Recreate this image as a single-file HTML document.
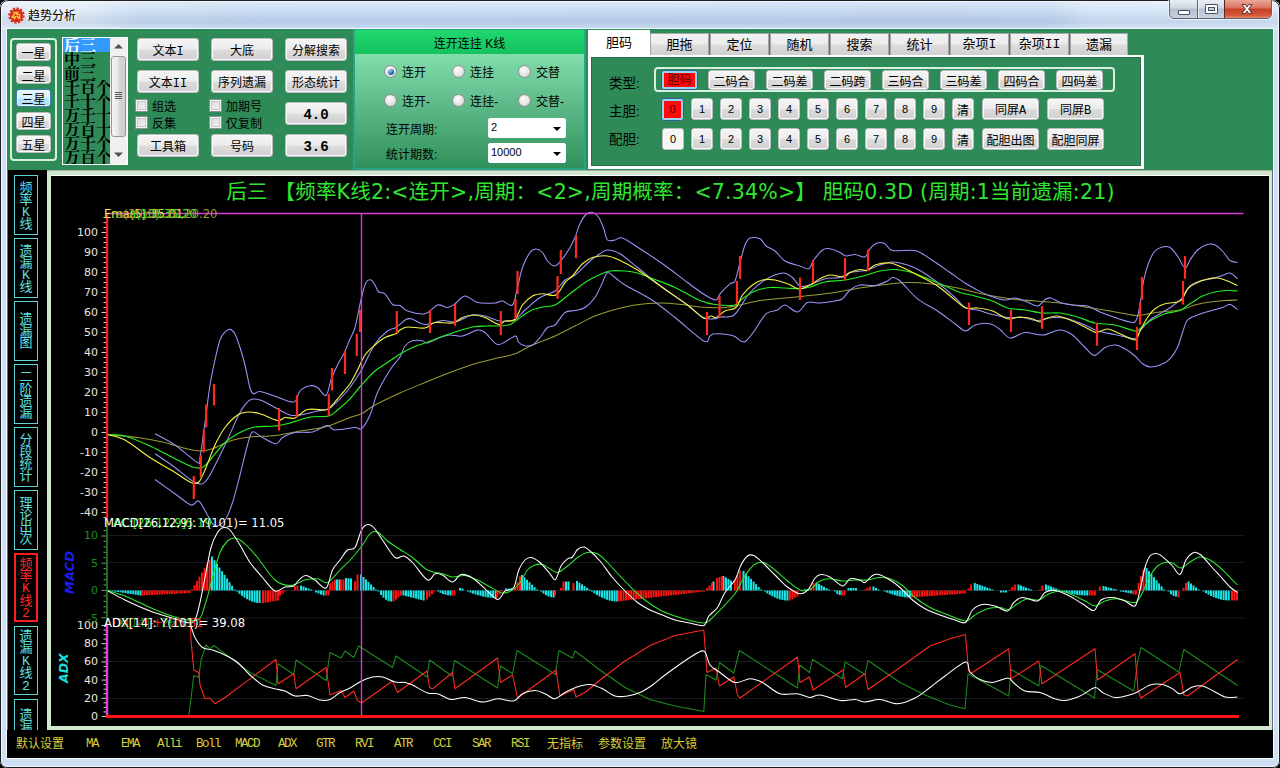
<!DOCTYPE html>
<html lang="zh-CN">
<head>
<meta charset="utf-8">
<title>趋势分析</title>
<style>
*{box-sizing:border-box;margin:0;padding:0}
html,body{width:1280px;height:768px;overflow:hidden;background:#000}
body{position:relative;font-family:"Liberation Sans","Noto Sans CJK SC",sans-serif;font-size:12px;color:#000}
.abs,.win *{position:absolute}
.win{position:absolute;left:0;top:0;width:1280px;height:768px;border-radius:8px 8px 7px 7px;background:#cfe0f6;overflow:hidden}
.fr-out{left:0;top:0;width:1280px;height:768px;border:1px solid #1c1c1c;border-radius:8px 8px 7px 7px}
.glass{left:0;top:0;width:1280px;height:30px;background:linear-gradient(90deg,#dfe9f6 0,#dce8f6 7%,#cbddf3 10.5%,#c4d9f1 20%,#c3d8f0 50%,#c0d5ed 70%,#c1d6ee 82%,#d2e3f6 85%,#d6e6f8 100%)}
.glass2{left:0;top:0;width:1280px;height:30px;background:linear-gradient(180deg,rgba(255,255,255,.45) 0,rgba(255,255,255,.12) 35%,rgba(90,120,160,.10) 60%,rgba(90,120,160,.12) 75%,rgba(255,255,255,.15) 100%)}
.fr-in{left:1px;top:1px;width:1278px;height:766px;border:1px solid #f2f8ff;border-radius:7px 7px 6px 6px}
.client{left:6px;top:28px;width:1268px;height:731px;background:#000;border:1px solid #f4faff;box-shadow:inset 1px 1px 0 #5e6878,inset -1px 0 0 #5e6878}
.ttl{left:28px;top:8px;font-size:12px;line-height:16px;color:#000;white-space:nowrap;text-shadow:0 0 6px #fff,0 0 6px #fff}
.cn{font-family:"Liberation Sans","Noto Sans CJK SC",sans-serif}
.mono{font-family:"Liberation Mono","Noto Sans CJK SC",monospace}
/* top green */
.top{left:7px;top:29px;width:1266px;height:141px;background:#2e8b57}
.btn{border:1px solid #b9bdbd;border-radius:3px;background:linear-gradient(180deg,#f4f4f4 0,#ececec 48%,#dcdcdc 52%,#d0d0d0 100%);box-shadow:inset 0 0 0 1px #fbfbfb;text-align:center;white-space:nowrap;color:#000;font-size:12px;overflow:hidden}
.btn.hot{border-color:#3c7fb1;background:linear-gradient(180deg,#eaf6fd 0,#d9f0fc 48%,#bee6fd 52%,#a7d9f5 100%);box-shadow:inset 0 0 0 1px #e6f5fd}
.gbox{border:2px solid #d6f0e0;border-radius:4px}
.chk{width:13px;height:13px;border:1px solid #8e8f8f;background:linear-gradient(135deg,#d8d8d8 0,#f6f6f6 100%);box-shadow:inset 0 0 0 1px #f4f4f4,inset 0 0 0 2px #c4c8cc}
.lbl{white-space:nowrap;line-height:14px}
.radio{width:13px;height:13px;border-radius:50%;border:1px solid #8e8f8f;background:radial-gradient(circle at 40% 35%,#fdfdfd 0,#e4e4e4 55%,#c6c6c6 100%)}
.radio.on::after{content:"";position:absolute;left:2.5px;top:2.5px;width:6px;height:6px;border-radius:50%;background:radial-gradient(circle at 35% 30%,#9fd8f6 0,#1f6fb4 55%,#0b3f78 100%)}
.combo{background:#fff;border-radius:2px;border:1px solid #fff}
.tab{border:1px solid #a4a8a8;border-bottom:none;background:linear-gradient(180deg,#f2f2f2 0,#ebebeb 48%,#dddddd 52%,#cfcfcf 100%);text-align:center;font-size:13px;line-height:22px}
.side{border:1.5px solid #5fd2d2;color:#5fe0e0;font-size:13px;line-height:12px;text-align:center}
.side span{position:static;display:block}
.bb{top:738px;color:#d6ce3c;font-size:12px;line-height:14px;white-space:nowrap}
.chart{left:0;top:0}
.bb.lat{font-size:12.5px;letter-spacing:-1.5px;top:737px}
.li{left:0;width:47px;padding-left:1px;height:14px;overflow:hidden;font-size:16px;font-weight:bold;line-height:15px;letter-spacing:0px;white-space:nowrap;background:#2e8b57;font-family:"Liberation Serif","Noto Serif CJK SC",serif}
</style>
</head>
<body>
<div class="win">
  <div class="glass"></div><div class="glass2"></div>
  <div class="fr-in"></div><div class="fr-out"></div>
  <!-- title -->
  <svg class="abs" style="left:7.5px;top:6.5px" width="17" height="17" viewBox="0 0 17 17"><circle cx="8.5" cy="8.5" r="6.6" fill="#d62a1e"/><circle cx="8.5" cy="8.5" r="7.1" fill="none" stroke="#d62a1e" stroke-width="2.2" stroke-dasharray="2.2 1.5"/><path d="M5.2 5.4h4.6l-1.1 2h2.9c.4 2.3-.4 3.8-2.1 4M7.2 5.6L4.2 10h3.4l-1.8 2.2M9.2 8.6c.3 1.3 1.5 2.7 3.4 3.1" fill="none" stroke="#f8c838" stroke-width="1.4"/></svg>
  <div class="ttl cn">趋势分析</div>
  <!-- caption buttons -->
  <div style="left:1169px;top:-1px;width:103px;height:20px;border:1px solid #5a6472;border-radius:0 0 5px 5px;background:linear-gradient(180deg,#e8eef6 0,#cfd8e4 45%,#b4c0d0 50%,#c6d2e2 100%);box-shadow:0 0 0 1px rgba(255,255,255,.6)"></div>
  <div style="left:1197px;top:0;width:1px;height:18px;background:#5a6472"></div>
  <div style="left:1198px;top:0;width:1px;height:18px;background:rgba(255,255,255,.7)"></div>
  <div style="left:1224px;top:0;width:47px;height:18px;border-left:1px solid #5a2a22;border-radius:0 0 4px 0;background:linear-gradient(180deg,#e9a99a 0,#d9705a 45%,#c43e22 50%,#d4583a 85%,#e48a6a 100%)"></div>
  <div style="left:1178px;top:10px;width:12px;height:5px;border:1px solid #47505c;background:#fff;border-radius:1px"></div>
  <div style="left:1205px;top:4px;width:13px;height:10px;border:1px solid #47505c;background:#fff;border-radius:1px"></div>
  <div style="left:1208px;top:7px;width:7px;height:4px;border:1px solid #47505c;background:#c8d2de"></div>
  <svg class="abs" style="left:1240px;top:3px" width="14" height="12" viewBox="0 0 14 12"><path d="M2 1.5l3.2 0 1.8 2.6 1.8-2.6 3.2 0-3.4 4.5 3.4 4.5-3.2 0-1.8-2.6-1.8 2.6-3.2 0 3.4-4.5z" fill="#fff" stroke="#5a3a38" stroke-width="1"/></svg>

  <div class="client"></div>
  <!-- ============ TOP GREEN PANEL ============ -->
  <div class="top"></div>
  <!-- star group -->
  <div class="gbox" style="left:10px;top:38px;width:47px;height:123px"></div>
  <div class="btn cn" style="left:16px;top:43px;width:35px;height:18px;line-height:21px">一星</div>
  <div class="btn cn" style="left:16px;top:66px;width:35px;height:18px;line-height:21px">二星</div>
  <div class="btn cn hot" style="left:16px;top:89px;width:35px;height:18px;line-height:21px">三星</div>
  <div class="btn cn" style="left:16px;top:112px;width:35px;height:18px;line-height:21px">四星</div>
  <div class="btn cn" style="left:16px;top:135px;width:35px;height:18px;line-height:21px">五星</div>
  <!-- listbox -->
  <div style="left:62px;top:37px;width:66px;height:128px;background:#fff"></div>
  <div style="left:63px;top:38px;width:47px;height:126px;background:#2e8b57;overflow:hidden">
    <div class="li" style="top:0;background:#3399ff;color:#fff">后三</div>
    <div class="li" style="top:14px">中三</div>
    <div class="li" style="top:28px">前三</div>
    <div class="li" style="top:42px">千百个</div>
    <div class="li" style="top:56px">千十个</div>
    <div class="li" style="top:70px">万千十</div>
    <div class="li" style="top:84px">万百十</div>
    <div class="li" style="top:98px">万千个</div>
    <div class="li" style="top:112px">万百个</div>
  </div>
  <div style="left:110px;top:38px;width:17px;height:126px;background:#f0f0f0"></div>
  <div style="left:111px;top:56px;width:15px;height:81px;border:1px solid #979797;border-radius:3px;background:linear-gradient(90deg,#f4f4f4 0,#e9e9e9 45%,#d6d6d6 55%,#cfcfcf 100%)"></div>
  <div style="left:115px;top:92px;width:7px;height:1px;background:#555;box-shadow:0 2px 0 #555,0 4px 0 #555,0 6px 0 #555"></div>
  <svg class="abs" style="left:114px;top:43px" width="9" height="6" viewBox="0 0 9 6"><path d="M0 5.5L4.5 1 9 5.5z" fill="#505050"/></svg>
  <svg class="abs" style="left:114px;top:152px" width="9" height="6" viewBox="0 0 9 6"><path d="M0 .5L4.5 5 9 .5z" fill="#505050"/></svg>

  <!-- button columns -->
  <div class="btn mono" style="left:137px;top:38px;width:62px;height:23px;line-height:26px">文本I</div>
  <div class="btn mono" style="left:211px;top:38px;width:62px;height:23px;line-height:26px">大底</div>
  <div class="btn mono" style="left:285px;top:38px;width:62px;height:23px;line-height:26px">分解搜索</div>
  <div class="btn mono" style="left:137px;top:70px;width:62px;height:23px;line-height:26px">文本II</div>
  <div class="btn mono" style="left:211px;top:70px;width:62px;height:23px;line-height:26px">序列遗漏</div>
  <div class="btn mono" style="left:285px;top:70px;width:62px;height:23px;line-height:26px">形态统计</div>
  <div class="btn" style="left:285px;top:102px;width:62px;height:23px;line-height:24px;font-family:'Liberation Mono','Liberation Serif',monospace;font-weight:bold;font-size:14px;letter-spacing:0">4.0</div>
  <div class="btn" style="left:285px;top:134px;width:62px;height:23px;line-height:24px;font-family:'Liberation Mono','Liberation Serif',monospace;font-weight:bold;font-size:14px;letter-spacing:0">3.6</div>
  <div class="btn mono" style="left:137px;top:134px;width:62px;height:23px;line-height:26px">工具箱</div>
  <div class="btn mono" style="left:211px;top:134px;width:62px;height:23px;line-height:26px">号码</div>
  <div class="chk" style="left:135px;top:99px"></div><div class="lbl cn" style="left:152px;top:100px">组选</div>
  <div class="chk" style="left:135px;top:116px"></div><div class="lbl cn" style="left:152px;top:117px">反集</div>
  <div class="chk" style="left:209px;top:99px"></div><div class="lbl cn" style="left:226px;top:100px">加期号</div>
  <div class="chk" style="left:209px;top:116px"></div><div class="lbl cn" style="left:226px;top:117px">仅复制</div>

  <!-- kline panel -->
  <div style="left:353px;top:29px;width:233px;height:141px;background:linear-gradient(180deg,#82dcac 0,#82dcac 24px,#58b583 60%,#30905b 100%);border:2px solid #25a584;border-top-width:1px"></div>
  <div class="cn" style="left:355px;top:30px;width:229px;height:24px;background:linear-gradient(180deg,#20d86e 0,#14c25e 100%);text-align:center;line-height:29px;font-size:12px;overflow:hidden">连开连挂 K线</div>
  <div class="radio on" style="left:384px;top:65px"></div><div class="lbl cn" style="left:402px;top:66px">连开</div>
  <div class="radio" style="left:452px;top:65px"></div><div class="lbl cn" style="left:470px;top:66px">连挂</div>
  <div class="radio" style="left:518px;top:65px"></div><div class="lbl cn" style="left:536px;top:66px">交替</div>
  <div class="radio" style="left:384px;top:94px"></div><div class="lbl cn" style="left:402px;top:95px">连开-</div>
  <div class="radio" style="left:452px;top:94px"></div><div class="lbl cn" style="left:470px;top:95px">连挂-</div>
  <div class="radio" style="left:518px;top:94px"></div><div class="lbl cn" style="left:536px;top:95px">交替-</div>
  <div class="lbl cn" style="left:386px;top:123px">连开周期:</div>
  <div class="lbl cn" style="left:386px;top:148px">统计期数:</div>
  <div class="combo" style="left:488px;top:118px;width:78px;height:20px"></div>
  <div class="combo" style="left:488px;top:143px;width:78px;height:20px"></div>
  <div class="lbl" style="left:491px;top:120px;font-size:11px">2</div>
  <div class="lbl" style="left:491px;top:145px;font-size:11px">10000</div>
  <svg class="abs" style="left:553px;top:127px" width="8" height="4" viewBox="0 0 8 4"><path d="M0 0h8L4 4z" fill="#000"/></svg>
  <svg class="abs" style="left:553px;top:152px" width="8" height="4" viewBox="0 0 8 4"><path d="M0 0h8L4 4z" fill="#000"/></svg>

  <!-- tab control -->
  <div style="left:588px;top:55px;width:556px;height:114px;background:#fff"></div>
  <div style="left:591px;top:57px;width:550px;height:109px;background:#2e8b57;border:1px solid #256f46"></div>
  <div class="cn" style="left:588px;top:30px;width:62px;height:27px;background:#fff;text-align:center;font-size:13px;line-height:25px">胆码</div>
  <div class="tab cn" style="left:650px;top:33px;width:59px;height:22px">胆拖</div>
  <div class="tab cn" style="left:710px;top:33px;width:59px;height:22px">定位</div>
  <div class="tab cn" style="left:770px;top:33px;width:59px;height:22px">随机</div>
  <div class="tab cn" style="left:830px;top:33px;width:59px;height:22px">搜索</div>
  <div class="tab cn" style="left:890px;top:33px;width:59px;height:22px">统计</div>
  <div class="tab mono" style="left:950px;top:33px;width:59px;height:22px">杂项I</div>
  <div class="tab mono" style="left:1010px;top:33px;width:59px;height:22px">杂项II</div>
  <div class="tab cn" style="left:1070px;top:33px;width:58px;height:22px">遗漏</div>

  <div class="lbl cn" style="left:609px;top:77px;font-size:13.5px">类型:</div>
  <div class="lbl cn" style="left:609px;top:105px;font-size:13.5px">主胆:</div>
  <div class="lbl cn" style="left:609px;top:133px;font-size:13.5px">配胆:</div>
  <div class="gbox" style="left:654px;top:67px;width:461px;height:25px"></div>
  <div class="btn cn" style="left:661px;top:70px;width:37px;height:20px;line-height:22px;border-color:#2c628b;background:#9ad4f2;box-shadow:none"></div>
  <div class="cn" style="left:664px;top:73px;width:31px;height:14px;background:#ff0a0a;color:#5a0000;font-size:12px;line-height:14px;text-align:center;white-space:nowrap">胆码</div>
  <div class="btn cn" style="left:708px;top:70px;width:47px;height:20px;line-height:22px">二码合</div>
  <div class="btn cn" style="left:766px;top:70px;width:47px;height:20px;line-height:22px">二码差</div>
  <div class="btn cn" style="left:824px;top:70px;width:47px;height:20px;line-height:22px">二码跨</div>
  <div class="btn cn" style="left:882px;top:70px;width:47px;height:20px;line-height:22px">三码合</div>
  <div class="btn cn" style="left:940px;top:70px;width:47px;height:20px;line-height:22px">三码差</div>
  <div class="btn cn" style="left:998px;top:70px;width:47px;height:20px;line-height:22px">四码合</div>
  <div class="btn cn" style="left:1056px;top:70px;width:47px;height:20px;line-height:22px">四码差</div>
  <div class="btn" style="left:661px;top:98px;width:23px;height:23px;border-color:#2c628b;background:#9ad4f2;box-shadow:none"></div>
  <div style="left:664px;top:101px;width:17px;height:17px;background:#ff0a0a;color:#5a0000;font-size:11px;line-height:17px;text-align:center">0</div>
  <div class="btn" style="left:691px;top:98px;width:22px;height:22px;line-height:20px;font-size:11px">1</div>
  <div class="btn" style="left:720px;top:98px;width:22px;height:22px;line-height:20px;font-size:11px">2</div>
  <div class="btn" style="left:749px;top:98px;width:22px;height:22px;line-height:20px;font-size:11px">3</div>
  <div class="btn" style="left:778px;top:98px;width:22px;height:22px;line-height:20px;font-size:11px">4</div>
  <div class="btn" style="left:807px;top:98px;width:22px;height:22px;line-height:20px;font-size:11px">5</div>
  <div class="btn" style="left:836px;top:98px;width:22px;height:22px;line-height:20px;font-size:11px">6</div>
  <div class="btn" style="left:865px;top:98px;width:22px;height:22px;line-height:20px;font-size:11px">7</div>
  <div class="btn" style="left:894px;top:98px;width:22px;height:22px;line-height:20px;font-size:11px">8</div>
  <div class="btn" style="left:923px;top:98px;width:22px;height:22px;line-height:20px;font-size:11px">9</div>
  <div class="btn" style="left:662px;top:128px;width:22px;height:22px;line-height:20px;font-size:11px;background:#f6f6f6">0</div>
  <div class="btn" style="left:691px;top:128px;width:22px;height:22px;line-height:20px;font-size:11px">1</div>
  <div class="btn" style="left:720px;top:128px;width:22px;height:22px;line-height:20px;font-size:11px">2</div>
  <div class="btn" style="left:749px;top:128px;width:22px;height:22px;line-height:20px;font-size:11px">3</div>
  <div class="btn" style="left:778px;top:128px;width:22px;height:22px;line-height:20px;font-size:11px">4</div>
  <div class="btn" style="left:807px;top:128px;width:22px;height:22px;line-height:20px;font-size:11px">5</div>
  <div class="btn" style="left:836px;top:128px;width:22px;height:22px;line-height:20px;font-size:11px">6</div>
  <div class="btn" style="left:865px;top:128px;width:22px;height:22px;line-height:20px;font-size:11px">7</div>
  <div class="btn" style="left:894px;top:128px;width:22px;height:22px;line-height:20px;font-size:11px">8</div>
  <div class="btn" style="left:923px;top:128px;width:22px;height:22px;line-height:20px;font-size:11px">9</div>
  <div class="btn cn" style="left:952px;top:98px;width:22px;height:22px;line-height:24px">清</div>
  <div class="btn cn" style="left:952px;top:128px;width:22px;height:22px;line-height:24px">清</div>
  <div class="btn mono" style="left:982px;top:98px;width:57px;height:22px;line-height:24px">同屏A</div>
  <div class="btn mono" style="left:1047px;top:98px;width:57px;height:22px;line-height:24px">同屏B</div>
  <div class="btn cn" style="left:982px;top:128px;width:57px;height:22px;line-height:24px">配胆出图</div>
  <div class="btn cn" style="left:1047px;top:128px;width:57px;height:22px;line-height:24px">配胆同屏</div>

  <!-- ============ LEFT SIDE BAR ============ -->
  <div class="side mono" style="left:14px;top:175px;width:24px;height:60px;padding-top:7px"><span>频</span><span>率</span><span>K</span><span>线</span></div>
  <div class="side mono" style="left:14px;top:238px;width:24px;height:60px;padding-top:7px"><span>遗</span><span>漏</span><span>K</span><span>线</span></div>
  <div class="side mono" style="left:14px;top:301px;width:24px;height:60px;padding-top:12px"><span>遗</span><span>漏</span><span>图</span></div>
  <div class="side mono" style="left:14px;top:364px;width:24px;height:60px;padding-top:7px"><span>二</span><span>阶</span><span>遗</span><span>漏</span></div>
  <div class="side mono" style="left:14px;top:427px;width:24px;height:60px;padding-top:7px"><span>分</span><span>段</span><span>统</span><span>计</span></div>
  <div class="side mono" style="left:14px;top:490px;width:24px;height:60px;padding-top:7px"><span>理</span><span>论</span><span>出</span><span>次</span></div>
  <div class="side mono" style="left:14px;top:553px;width:24px;height:69px;padding-top:3.5px;border:2px solid #ff1e1e;color:#ff2a2a;line-height:12.4px"><span>频</span><span>率</span><span>K</span><span>线</span><span>2</span></div>
  <div class="side mono" style="left:14px;top:626px;width:24px;height:69px;padding-top:4px;line-height:12.4px"><span>遗</span><span>漏</span><span>K</span><span>线</span><span>2</span></div>
  <div class="side mono" style="left:14px;top:699px;width:24px;height:40px;padding-top:10px;border-bottom:none"><span>遗</span><span>漏</span></div>

  <!-- ============ CHART ============ -->
  <div style="left:47px;top:170px;width:1225px;height:560px;background:#cfe6cf;border-top:1px solid #a4b0a6"></div>
  <div style="left:51px;top:175px;width:1218px;height:551px;background:#000;border-top:1px solid #fff"></div>
  <div class="cn" style="left:54px;top:179px;width:1233px;text-align:center;font-size:20.5px;line-height:26px;color:#30e630;white-space:nowrap;letter-spacing:.2px;font-family:'DejaVu Sans','Noto Sans CJK SC',sans-serif">后三 【频率K线2:&lt;连开&gt;,周期：&lt;2&gt;,周期概率：&lt;7.34%&gt;】 胆码0.3D (周期:1当前遗漏:21)</div>
  <svg class="chart" width="1280" height="768" viewBox="0 0 1280 768">
<line x1="108" y1="535.5" x2="1243" y2="535.5" stroke="#191d21" stroke-width="1"/>
<line x1="108" y1="562.5" x2="1243" y2="562.5" stroke="#191d21" stroke-width="1"/>
<line x1="108" y1="590.5" x2="1243" y2="590.5" stroke="#191d21" stroke-width="1"/>
<line x1="108" y1="618" x2="1243" y2="618" stroke="#191d21" stroke-width="1"/>
<line x1="108" y1="661.5" x2="1243" y2="661.5" stroke="#191d21" stroke-width="1"/>
<line x1="108" y1="698.5" x2="1243" y2="698.5" stroke="#191d21" stroke-width="1"/>
<g fill="#19e6e6"><rect x="107.0" y="589.9" width="2.0" height="0.6"/><rect x="109.5" y="590.5" width="2.0" height="0.6"/><rect x="112.0" y="590.5" width="2.0" height="0.8"/><rect x="114.5" y="590.5" width="2.0" height="1.2"/><rect x="117.1" y="590.5" width="2.0" height="1.5"/><rect x="119.6" y="590.5" width="2.0" height="1.9"/><rect x="122.1" y="590.5" width="2.0" height="2.3"/><rect x="124.6" y="590.5" width="2.0" height="2.7"/><rect x="127.1" y="590.5" width="2.0" height="3.1"/><rect x="129.6" y="590.5" width="2.0" height="3.5"/><rect x="132.2" y="590.5" width="2.0" height="3.8"/><rect x="134.7" y="590.5" width="2.0" height="4.2"/><rect x="137.2" y="590.5" width="2.0" height="4.6"/><rect x="139.7" y="590.5" width="2.0" height="5.0"/><rect x="211.0" y="556.5" width="2.0" height="34.0"/><rect x="213.5" y="560.2" width="2.0" height="30.3"/><rect x="216.0" y="563.8" width="2.0" height="26.7"/><rect x="218.5" y="567.5" width="2.0" height="23.0"/><rect x="221.1" y="571.2" width="2.0" height="19.3"/><rect x="223.6" y="574.8" width="2.0" height="15.7"/><rect x="226.1" y="578.5" width="2.0" height="12.0"/><rect x="228.6" y="582.2" width="2.0" height="8.3"/><rect x="231.1" y="585.8" width="2.0" height="4.7"/><rect x="233.6" y="589.5" width="2.0" height="1.0"/><rect x="236.0" y="590.5" width="2.0" height="1.0"/><rect x="238.5" y="590.5" width="2.0" height="3.4"/><rect x="241.0" y="590.5" width="2.0" height="5.4"/><rect x="243.5" y="590.5" width="2.0" height="7.2"/><rect x="246.1" y="590.5" width="2.0" height="8.7"/><rect x="248.6" y="590.5" width="2.0" height="10.0"/><rect x="251.1" y="590.5" width="2.0" height="11.1"/><rect x="253.6" y="590.5" width="2.0" height="11.9"/><rect x="256.1" y="590.5" width="2.0" height="12.3"/><rect x="258.6" y="590.5" width="2.0" height="12.5"/><rect x="300.0" y="585.5" width="2.0" height="5.0"/><rect x="302.5" y="586.5" width="2.0" height="4.0"/><rect x="305.0" y="587.5" width="2.0" height="3.0"/><rect x="307.5" y="588.5" width="2.0" height="2.0"/><rect x="310.1" y="589.5" width="2.0" height="1.0"/><rect x="315.0" y="590.5" width="2.0" height="2.0"/><rect x="317.5" y="590.5" width="2.0" height="3.0"/><rect x="320.0" y="590.5" width="2.0" height="4.0"/><rect x="322.5" y="590.5" width="2.0" height="5.0"/><rect x="336.0" y="579.5" width="2.0" height="11.0"/><rect x="338.5" y="579.5" width="2.0" height="11.0"/><rect x="345.0" y="578.0" width="2.0" height="12.5"/><rect x="347.5" y="578.2" width="2.0" height="12.2"/><rect x="350.0" y="578.5" width="2.0" height="12.0"/><rect x="360.0" y="574.5" width="2.0" height="16.0"/><rect x="362.5" y="577.0" width="2.0" height="13.5"/><rect x="365.0" y="579.5" width="2.0" height="11.0"/><rect x="367.5" y="582.0" width="2.0" height="8.5"/><rect x="370.1" y="584.5" width="2.0" height="6.0"/><rect x="372.6" y="587.0" width="2.0" height="3.5"/><rect x="375.1" y="589.5" width="2.0" height="1.0"/><rect x="377.5" y="590.5" width="2.0" height="1.0"/><rect x="380.0" y="590.5" width="2.0" height="4.5"/><rect x="382.5" y="590.5" width="2.0" height="7.2"/><rect x="385.0" y="590.5" width="2.0" height="9.3"/><rect x="387.6" y="590.5" width="2.0" height="10.6"/><rect x="390.1" y="590.5" width="2.0" height="11.0"/><rect x="402.5" y="590.5" width="2.0" height="5.0"/><rect x="405.0" y="590.5" width="2.0" height="5.6"/><rect x="407.5" y="590.5" width="2.0" height="6.2"/><rect x="410.0" y="590.5" width="2.0" height="6.9"/><rect x="412.6" y="590.5" width="2.0" height="7.5"/><rect x="415.1" y="590.5" width="2.0" height="8.1"/><rect x="417.6" y="590.5" width="2.0" height="8.8"/><rect x="420.1" y="590.5" width="2.0" height="9.4"/><rect x="422.6" y="590.5" width="2.0" height="10.0"/><rect x="437.0" y="590.5" width="2.0" height="1.0"/><rect x="439.5" y="590.5" width="2.0" height="2.4"/><rect x="442.0" y="590.5" width="2.0" height="3.5"/><rect x="444.5" y="590.5" width="2.0" height="4.3"/><rect x="447.1" y="590.5" width="2.0" height="4.8"/><rect x="449.6" y="590.5" width="2.0" height="5.0"/><rect x="459.0" y="588.0" width="2.0" height="2.5"/><rect x="461.5" y="588.5" width="2.0" height="2.0"/><rect x="467.0" y="590.5" width="2.0" height="1.0"/><rect x="469.5" y="590.5" width="2.0" height="2.1"/><rect x="472.0" y="590.5" width="2.0" height="3.1"/><rect x="474.5" y="590.5" width="2.0" height="3.9"/><rect x="477.1" y="590.5" width="2.0" height="4.7"/><rect x="479.6" y="590.5" width="2.0" height="5.4"/><rect x="482.1" y="590.5" width="2.0" height="6.1"/><rect x="484.6" y="590.5" width="2.0" height="6.6"/><rect x="487.1" y="590.5" width="2.0" height="7.0"/><rect x="489.6" y="590.5" width="2.0" height="7.3"/><rect x="492.1" y="590.5" width="2.0" height="7.4"/><rect x="494.7" y="590.5" width="2.0" height="7.5"/><rect x="505.0" y="588.5" width="2.0" height="2.0"/><rect x="507.5" y="588.5" width="2.0" height="2.0"/><rect x="510.0" y="588.5" width="2.0" height="2.0"/><rect x="521.0" y="575.0" width="2.0" height="15.5"/><rect x="523.5" y="577.4" width="2.0" height="13.1"/><rect x="526.0" y="579.8" width="2.0" height="10.7"/><rect x="528.5" y="582.2" width="2.0" height="8.2"/><rect x="531.1" y="584.7" width="2.0" height="5.8"/><rect x="533.6" y="587.1" width="2.0" height="3.4"/><rect x="536.1" y="589.5" width="2.0" height="1.0"/><rect x="540.0" y="590.5" width="2.0" height="1.0"/><rect x="542.5" y="590.5" width="2.0" height="3.1"/><rect x="545.0" y="590.5" width="2.0" height="4.7"/><rect x="547.5" y="590.5" width="2.0" height="6.0"/><rect x="550.1" y="590.5" width="2.0" height="6.7"/><rect x="552.6" y="590.5" width="2.0" height="7.0"/><rect x="565.0" y="581.5" width="2.0" height="9.0"/><rect x="567.5" y="581.5" width="2.0" height="9.0"/><rect x="576.0" y="581.0" width="2.0" height="9.5"/><rect x="578.5" y="582.7" width="2.0" height="7.8"/><rect x="581.0" y="584.4" width="2.0" height="6.1"/><rect x="583.5" y="586.1" width="2.0" height="4.4"/><rect x="586.1" y="587.8" width="2.0" height="2.7"/><rect x="588.6" y="589.5" width="2.0" height="1.0"/><rect x="591.0" y="590.5" width="2.0" height="1.0"/><rect x="593.5" y="590.5" width="2.0" height="2.9"/><rect x="596.0" y="590.5" width="2.0" height="4.5"/><rect x="598.5" y="590.5" width="2.0" height="5.9"/><rect x="601.1" y="590.5" width="2.0" height="7.2"/><rect x="603.6" y="590.5" width="2.0" height="8.3"/><rect x="606.1" y="590.5" width="2.0" height="9.3"/><rect x="608.6" y="590.5" width="2.0" height="10.0"/><rect x="611.1" y="590.5" width="2.0" height="10.6"/><rect x="613.6" y="590.5" width="2.0" height="10.9"/><rect x="616.1" y="590.5" width="2.0" height="11.0"/><rect x="712.5" y="581.5" width="2.0" height="9.0"/><rect x="722.5" y="576.0" width="2.0" height="14.5"/><rect x="725.0" y="577.5" width="2.0" height="13.0"/><rect x="727.5" y="579.0" width="2.0" height="11.5"/><rect x="730.0" y="580.5" width="2.0" height="10.0"/><rect x="742.5" y="571.0" width="2.0" height="19.5"/><rect x="745.0" y="573.6" width="2.0" height="16.9"/><rect x="747.5" y="576.3" width="2.0" height="14.2"/><rect x="750.0" y="578.9" width="2.0" height="11.6"/><rect x="752.6" y="581.6" width="2.0" height="8.9"/><rect x="755.1" y="584.2" width="2.0" height="6.3"/><rect x="757.6" y="586.9" width="2.0" height="3.6"/><rect x="760.1" y="589.5" width="2.0" height="1.0"/><rect x="763.8" y="590.5" width="2.0" height="1.0"/><rect x="766.3" y="590.5" width="2.0" height="2.9"/><rect x="768.8" y="590.5" width="2.0" height="4.4"/><rect x="771.3" y="590.5" width="2.0" height="5.8"/><rect x="773.8" y="590.5" width="2.0" height="7.0"/><rect x="776.3" y="590.5" width="2.0" height="8.1"/><rect x="778.8" y="590.5" width="2.0" height="8.9"/><rect x="781.4" y="590.5" width="2.0" height="9.5"/><rect x="783.9" y="590.5" width="2.0" height="9.9"/><rect x="786.4" y="590.5" width="2.0" height="10.0"/><rect x="803.8" y="589.3" width="2.0" height="1.2"/><rect x="806.3" y="589.3" width="2.0" height="1.2"/><rect x="815.5" y="582.5" width="2.0" height="8.0"/><rect x="818.0" y="583.9" width="2.0" height="6.6"/><rect x="820.5" y="585.3" width="2.0" height="5.2"/><rect x="823.0" y="586.7" width="2.0" height="3.8"/><rect x="825.6" y="588.1" width="2.0" height="2.4"/><rect x="828.1" y="589.5" width="2.0" height="1.0"/><rect x="833.8" y="590.5" width="2.0" height="1.0"/><rect x="836.3" y="590.5" width="2.0" height="3.6"/><rect x="838.8" y="590.5" width="2.0" height="4.5"/><rect x="847.5" y="588.0" width="2.0" height="2.5"/><rect x="850.0" y="588.0" width="2.0" height="2.5"/><rect x="852.5" y="588.0" width="2.0" height="2.5"/><rect x="855.0" y="588.0" width="2.0" height="2.5"/><rect x="872.5" y="586.5" width="2.0" height="4.0"/><rect x="875.0" y="588.0" width="2.0" height="2.5"/><rect x="877.5" y="589.5" width="2.0" height="1.0"/><rect x="883.8" y="590.5" width="2.0" height="1.0"/><rect x="886.3" y="590.5" width="2.0" height="2.1"/><rect x="888.8" y="590.5" width="2.0" height="3.1"/><rect x="891.3" y="590.5" width="2.0" height="3.9"/><rect x="893.8" y="590.5" width="2.0" height="4.7"/><rect x="896.3" y="590.5" width="2.0" height="5.4"/><rect x="898.8" y="590.5" width="2.0" height="6.0"/><rect x="901.4" y="590.5" width="2.0" height="6.4"/><rect x="903.9" y="590.5" width="2.0" height="6.7"/><rect x="906.4" y="590.5" width="2.0" height="6.9"/><rect x="908.9" y="590.5" width="2.0" height="7.0"/><rect x="973.8" y="583.0" width="2.0" height="7.5"/><rect x="976.3" y="583.9" width="2.0" height="6.6"/><rect x="978.8" y="584.9" width="2.0" height="5.6"/><rect x="981.3" y="585.8" width="2.0" height="4.7"/><rect x="983.8" y="586.7" width="2.0" height="3.8"/><rect x="986.3" y="587.6" width="2.0" height="2.9"/><rect x="988.8" y="588.6" width="2.0" height="1.9"/><rect x="991.4" y="589.5" width="2.0" height="1.0"/><rect x="1000.0" y="590.5" width="2.0" height="2.0"/><rect x="1002.5" y="590.5" width="2.0" height="2.0"/><rect x="1005.0" y="590.5" width="2.0" height="2.0"/><rect x="1017.5" y="584.5" width="2.0" height="6.0"/><rect x="1020.0" y="585.5" width="2.0" height="5.0"/><rect x="1022.5" y="586.5" width="2.0" height="4.0"/><rect x="1025.0" y="587.5" width="2.0" height="3.0"/><rect x="1027.6" y="588.5" width="2.0" height="2.0"/><rect x="1030.1" y="589.5" width="2.0" height="1.0"/><rect x="1045.0" y="584.5" width="2.0" height="6.0"/><rect x="1047.5" y="585.5" width="2.0" height="5.0"/><rect x="1050.0" y="586.5" width="2.0" height="4.0"/><rect x="1052.5" y="587.5" width="2.0" height="3.0"/><rect x="1055.1" y="588.5" width="2.0" height="2.0"/><rect x="1057.6" y="589.5" width="2.0" height="1.0"/><rect x="1061.0" y="590.5" width="2.0" height="1.0"/><rect x="1063.5" y="590.5" width="2.0" height="1.8"/><rect x="1066.0" y="590.5" width="2.0" height="2.4"/><rect x="1068.5" y="590.5" width="2.0" height="3.0"/><rect x="1071.1" y="590.5" width="2.0" height="3.5"/><rect x="1073.6" y="590.5" width="2.0" height="3.9"/><rect x="1076.1" y="590.5" width="2.0" height="4.3"/><rect x="1078.6" y="590.5" width="2.0" height="4.6"/><rect x="1081.1" y="590.5" width="2.0" height="4.8"/><rect x="1083.6" y="590.5" width="2.0" height="5.0"/><rect x="1086.2" y="590.5" width="2.0" height="5.0"/><rect x="1102.5" y="586.0" width="2.0" height="4.5"/><rect x="1105.0" y="586.7" width="2.0" height="3.8"/><rect x="1107.5" y="587.4" width="2.0" height="3.1"/><rect x="1110.0" y="588.1" width="2.0" height="2.4"/><rect x="1112.6" y="588.8" width="2.0" height="1.7"/><rect x="1115.1" y="589.5" width="2.0" height="1.0"/><rect x="1120.0" y="590.5" width="2.0" height="1.0"/><rect x="1122.5" y="590.5" width="2.0" height="1.5"/><rect x="1125.0" y="590.5" width="2.0" height="2.0"/><rect x="1127.5" y="590.5" width="2.0" height="2.5"/><rect x="1130.1" y="590.5" width="2.0" height="3.0"/><rect x="1145.5" y="568.0" width="2.0" height="22.5"/><rect x="1148.0" y="571.1" width="2.0" height="19.4"/><rect x="1150.5" y="574.1" width="2.0" height="16.4"/><rect x="1153.0" y="577.2" width="2.0" height="13.3"/><rect x="1155.6" y="580.3" width="2.0" height="10.2"/><rect x="1158.1" y="583.4" width="2.0" height="7.1"/><rect x="1160.6" y="586.4" width="2.0" height="4.1"/><rect x="1163.1" y="589.5" width="2.0" height="1.0"/><rect x="1167.5" y="590.5" width="2.0" height="1.0"/><rect x="1170.0" y="590.5" width="2.0" height="3.7"/><rect x="1172.5" y="590.5" width="2.0" height="5.4"/><rect x="1175.0" y="590.5" width="2.0" height="6.0"/><rect x="1187.5" y="581.5" width="2.0" height="9.0"/><rect x="1190.0" y="583.5" width="2.0" height="7.0"/><rect x="1192.5" y="585.5" width="2.0" height="5.0"/><rect x="1195.0" y="587.5" width="2.0" height="3.0"/><rect x="1197.6" y="589.5" width="2.0" height="1.0"/><rect x="1202.5" y="590.5" width="2.0" height="1.0"/><rect x="1205.0" y="590.5" width="2.0" height="2.7"/><rect x="1207.5" y="590.5" width="2.0" height="4.1"/><rect x="1210.0" y="590.5" width="2.0" height="5.4"/><rect x="1212.6" y="590.5" width="2.0" height="6.6"/><rect x="1215.1" y="590.5" width="2.0" height="7.6"/><rect x="1217.6" y="590.5" width="2.0" height="8.4"/><rect x="1220.1" y="590.5" width="2.0" height="9.1"/><rect x="1222.6" y="590.5" width="2.0" height="9.6"/><rect x="1225.1" y="590.5" width="2.0" height="9.9"/><rect x="1227.7" y="590.5" width="2.0" height="10.0"/></g>
<g fill="#ff1414"><rect x="141.0" y="590.5" width="2.0" height="5.0"/><rect x="143.5" y="590.5" width="2.0" height="4.9"/><rect x="146.0" y="590.5" width="2.0" height="4.7"/><rect x="148.5" y="590.5" width="2.0" height="4.6"/><rect x="151.1" y="590.5" width="2.0" height="4.5"/><rect x="153.6" y="590.5" width="2.0" height="4.3"/><rect x="156.1" y="590.5" width="2.0" height="4.2"/><rect x="158.6" y="590.5" width="2.0" height="4.1"/><rect x="161.1" y="590.5" width="2.0" height="3.9"/><rect x="163.6" y="590.5" width="2.0" height="3.8"/><rect x="166.2" y="590.5" width="2.0" height="3.7"/><rect x="168.7" y="590.5" width="2.0" height="3.6"/><rect x="171.2" y="590.5" width="2.0" height="3.4"/><rect x="173.7" y="590.5" width="2.0" height="3.3"/><rect x="176.2" y="590.5" width="2.0" height="3.2"/><rect x="178.7" y="590.5" width="2.0" height="3.0"/><rect x="181.2" y="590.5" width="2.0" height="2.9"/><rect x="183.8" y="590.5" width="2.0" height="2.8"/><rect x="186.3" y="590.5" width="2.0" height="2.6"/><rect x="188.8" y="590.5" width="2.0" height="2.5"/><rect x="191.0" y="589.5" width="2.0" height="1.0"/><rect x="193.5" y="585.2" width="2.0" height="5.3"/><rect x="196.0" y="580.9" width="2.0" height="9.6"/><rect x="198.5" y="576.6" width="2.0" height="13.9"/><rect x="201.1" y="572.4" width="2.0" height="18.1"/><rect x="203.6" y="568.1" width="2.0" height="22.4"/><rect x="206.1" y="563.8" width="2.0" height="26.7"/><rect x="208.6" y="559.5" width="2.0" height="31.0"/><rect x="262.0" y="590.5" width="2.0" height="12.5"/><rect x="264.5" y="590.5" width="2.0" height="12.1"/><rect x="267.0" y="590.5" width="2.0" height="11.7"/><rect x="269.5" y="590.5" width="2.0" height="11.2"/><rect x="272.1" y="590.5" width="2.0" height="10.8"/><rect x="274.6" y="590.5" width="2.0" height="10.4"/><rect x="277.1" y="590.5" width="2.0" height="10.0"/><rect x="279.0" y="590.5" width="2.0" height="5.0"/><rect x="281.5" y="590.5" width="2.0" height="3.0"/><rect x="284.0" y="590.5" width="2.0" height="1.0"/><rect x="294.0" y="586.5" width="2.0" height="4.0"/><rect x="296.5" y="585.5" width="2.0" height="5.0"/><rect x="325.0" y="590.5" width="2.0" height="5.0"/><rect x="327.5" y="590.5" width="2.0" height="5.0"/><rect x="329.0" y="583.5" width="2.0" height="7.0"/><rect x="331.5" y="581.5" width="2.0" height="9.0"/><rect x="334.0" y="579.5" width="2.0" height="11.0"/><rect x="340.0" y="579.5" width="2.0" height="11.0"/><rect x="342.5" y="579.5" width="2.0" height="11.0"/><rect x="354.0" y="581.5" width="2.0" height="9.0"/><rect x="356.5" y="574.5" width="2.0" height="16.0"/><rect x="392.5" y="590.5" width="2.0" height="11.0"/><rect x="395.0" y="590.5" width="2.0" height="9.0"/><rect x="397.5" y="590.5" width="2.0" height="7.0"/><rect x="400.0" y="590.5" width="2.0" height="5.0"/><rect x="426.0" y="590.5" width="2.0" height="9.0"/><rect x="428.5" y="590.5" width="2.0" height="6.3"/><rect x="431.0" y="590.5" width="2.0" height="3.7"/><rect x="433.5" y="590.5" width="2.0" height="1.0"/><rect x="451.0" y="590.5" width="2.0" height="5.0"/><rect x="453.5" y="590.5" width="2.0" height="5.0"/><rect x="496.0" y="590.5" width="2.0" height="7.5"/><rect x="498.5" y="590.5" width="2.0" height="4.2"/><rect x="501.0" y="590.5" width="2.0" height="1.0"/><rect x="514.0" y="587.5" width="2.0" height="3.0"/><rect x="516.5" y="582.0" width="2.0" height="8.5"/><rect x="519.0" y="576.5" width="2.0" height="14.0"/><rect x="554.0" y="590.5" width="2.0" height="5.0"/><rect x="560.0" y="588.0" width="2.0" height="2.5"/><rect x="562.5" y="581.5" width="2.0" height="9.0"/><rect x="572.5" y="583.0" width="2.0" height="7.5"/><rect x="617.5" y="590.5" width="2.0" height="11.0"/><rect x="620.0" y="590.5" width="2.0" height="10.7"/><rect x="622.5" y="590.5" width="2.0" height="10.3"/><rect x="625.0" y="590.5" width="2.0" height="10.0"/><rect x="627.6" y="590.5" width="2.0" height="9.7"/><rect x="630.1" y="590.5" width="2.0" height="9.3"/><rect x="632.6" y="590.5" width="2.0" height="9.0"/><rect x="635.0" y="590.5" width="2.0" height="9.0"/><rect x="637.5" y="590.5" width="2.0" height="8.7"/><rect x="640.0" y="590.5" width="2.0" height="8.4"/><rect x="642.5" y="590.5" width="2.0" height="8.1"/><rect x="645.1" y="590.5" width="2.0" height="7.8"/><rect x="647.6" y="590.5" width="2.0" height="7.5"/><rect x="650.1" y="590.5" width="2.0" height="7.2"/><rect x="652.6" y="590.5" width="2.0" height="6.9"/><rect x="655.1" y="590.5" width="2.0" height="6.6"/><rect x="657.6" y="590.5" width="2.0" height="6.3"/><rect x="660.1" y="590.5" width="2.0" height="6.0"/><rect x="662.7" y="590.5" width="2.0" height="5.7"/><rect x="665.2" y="590.5" width="2.0" height="5.4"/><rect x="667.7" y="590.5" width="2.0" height="5.1"/><rect x="670.2" y="590.5" width="2.0" height="4.9"/><rect x="672.7" y="590.5" width="2.0" height="4.6"/><rect x="675.2" y="590.5" width="2.0" height="4.3"/><rect x="677.8" y="590.5" width="2.0" height="4.0"/><rect x="680.3" y="590.5" width="2.0" height="3.7"/><rect x="682.8" y="590.5" width="2.0" height="3.4"/><rect x="685.3" y="590.5" width="2.0" height="3.1"/><rect x="687.8" y="590.5" width="2.0" height="2.8"/><rect x="690.3" y="590.5" width="2.0" height="2.5"/><rect x="692.8" y="590.5" width="2.0" height="2.2"/><rect x="695.4" y="590.5" width="2.0" height="1.9"/><rect x="697.9" y="590.5" width="2.0" height="1.6"/><rect x="700.4" y="590.5" width="2.0" height="1.3"/><rect x="702.9" y="590.5" width="2.0" height="1.0"/><rect x="706.0" y="588.0" width="2.0" height="2.5"/><rect x="708.5" y="585.5" width="2.0" height="5.0"/><rect x="711.0" y="583.0" width="2.0" height="7.5"/><rect x="716.0" y="578.0" width="2.0" height="12.5"/><rect x="718.5" y="577.0" width="2.0" height="13.5"/><rect x="721.0" y="576.0" width="2.0" height="14.5"/><rect x="733.8" y="580.5" width="2.0" height="10.0"/><rect x="736.3" y="575.5" width="2.0" height="15.0"/><rect x="738.8" y="570.5" width="2.0" height="20.0"/><rect x="788.8" y="590.5" width="2.0" height="10.0"/><rect x="791.3" y="590.5" width="2.0" height="8.7"/><rect x="793.8" y="590.5" width="2.0" height="7.3"/><rect x="796.3" y="590.5" width="2.0" height="6.0"/><rect x="810.0" y="588.0" width="2.0" height="2.5"/><rect x="812.5" y="583.0" width="2.0" height="7.5"/><rect x="841.0" y="590.5" width="2.0" height="5.0"/><rect x="843.5" y="590.5" width="2.0" height="5.0"/><rect x="863.8" y="589.5" width="2.0" height="1.0"/><rect x="866.3" y="588.0" width="2.0" height="2.5"/><rect x="868.8" y="586.5" width="2.0" height="4.0"/><rect x="911.0" y="590.5" width="2.0" height="7.0"/><rect x="913.5" y="590.5" width="2.0" height="6.8"/><rect x="916.0" y="590.5" width="2.0" height="6.6"/><rect x="918.5" y="590.5" width="2.0" height="6.4"/><rect x="921.1" y="590.5" width="2.0" height="6.2"/><rect x="923.6" y="590.5" width="2.0" height="6.0"/><rect x="926.1" y="590.5" width="2.0" height="5.9"/><rect x="928.6" y="590.5" width="2.0" height="5.7"/><rect x="931.1" y="590.5" width="2.0" height="5.5"/><rect x="933.6" y="590.5" width="2.0" height="5.3"/><rect x="936.1" y="590.5" width="2.0" height="5.1"/><rect x="938.7" y="590.5" width="2.0" height="4.9"/><rect x="941.2" y="590.5" width="2.0" height="4.7"/><rect x="943.7" y="590.5" width="2.0" height="4.5"/><rect x="946.2" y="590.5" width="2.0" height="4.3"/><rect x="948.7" y="590.5" width="2.0" height="4.1"/><rect x="951.2" y="590.5" width="2.0" height="4.0"/><rect x="953.8" y="590.5" width="2.0" height="3.8"/><rect x="956.3" y="590.5" width="2.0" height="3.6"/><rect x="958.8" y="590.5" width="2.0" height="3.4"/><rect x="961.3" y="590.5" width="2.0" height="3.2"/><rect x="963.8" y="590.5" width="2.0" height="3.0"/><rect x="967.5" y="588.5" width="2.0" height="2.0"/><rect x="970.0" y="584.5" width="2.0" height="6.0"/><rect x="1008.8" y="589.5" width="2.0" height="1.0"/><rect x="1011.3" y="587.0" width="2.0" height="3.5"/><rect x="1013.8" y="584.5" width="2.0" height="6.0"/><rect x="1038.8" y="589.5" width="2.0" height="1.0"/><rect x="1041.3" y="585.5" width="2.0" height="5.0"/><rect x="1088.8" y="590.5" width="2.0" height="5.0"/><rect x="1091.3" y="590.5" width="2.0" height="5.0"/><rect x="1093.8" y="590.5" width="2.0" height="5.0"/><rect x="1098.8" y="586.5" width="2.0" height="4.0"/><rect x="1132.5" y="590.5" width="2.0" height="4.0"/><rect x="1135.0" y="590.5" width="2.0" height="4.0"/><rect x="1137.5" y="583.0" width="2.0" height="7.5"/><rect x="1140.0" y="576.2" width="2.0" height="14.2"/><rect x="1142.5" y="569.5" width="2.0" height="21.0"/><rect x="1177.5" y="590.5" width="2.0" height="7.0"/><rect x="1182.5" y="588.0" width="2.0" height="2.5"/><rect x="1185.0" y="583.0" width="2.0" height="7.5"/><rect x="1231.0" y="590.5" width="2.0" height="10.0"/><rect x="1233.5" y="590.5" width="2.0" height="10.0"/><rect x="1236.0" y="590.5" width="2.0" height="10.0"/></g>
<path d="M107.0 434.5C111.9 435.0 128.6 436.3 137.5 437.5C146.4 438.7 154.5 440.2 162.5 442.0C170.5 443.8 181.5 447.6 187.5 449.0C193.5 450.4 196.0 451.0 200.0 451.0C204.0 451.0 207.7 450.4 212.5 448.8C217.3 447.1 224.0 442.9 230.0 441.0C236.0 439.1 242.8 437.9 250.0 437.0C257.2 436.1 267.0 436.5 275.0 435.5C283.0 434.5 292.0 432.4 300.0 431.0C308.0 429.6 317.0 429.2 325.0 427.0C333.0 424.8 344.2 419.6 350.0 417.5C355.8 415.4 357.5 415.8 361.5 413.8C365.5 411.8 368.8 408.3 375.0 405.0C381.2 401.7 392.0 396.6 400.0 393.0C408.0 389.4 417.0 385.8 425.0 382.5C433.0 379.2 442.0 375.5 450.0 372.5C458.0 369.5 467.0 366.1 475.0 363.8C483.0 361.4 493.6 359.1 500.0 357.5C506.4 355.9 509.8 355.8 515.0 353.8C520.2 351.8 526.1 347.8 532.5 345.0C538.9 342.2 548.2 339.0 555.0 336.0C561.8 333.0 568.6 329.2 575.0 326.0C581.4 322.8 588.6 318.6 595.0 316.0C601.4 313.4 608.6 311.3 615.0 309.5C621.4 307.7 627.8 306.0 635.0 305.0C642.2 304.0 652.4 303.1 660.0 303.0C667.6 302.9 676.1 303.9 682.5 304.5C688.9 305.1 693.2 306.5 700.0 307.0C706.8 307.5 718.6 307.8 725.0 307.5C731.4 307.2 734.4 306.1 740.0 305.0C745.6 303.9 752.8 301.6 760.0 300.5C767.2 299.4 777.0 298.8 785.0 298.0C793.0 297.2 802.0 296.4 810.0 295.5C818.0 294.6 827.0 293.7 835.0 292.5C843.0 291.3 852.0 289.3 860.0 288.0C868.0 286.7 877.4 285.4 885.0 284.5C892.6 283.6 900.3 282.6 907.5 282.5C914.7 282.4 922.4 282.9 930.0 283.8C937.6 284.6 946.2 285.8 955.0 287.5C963.8 289.2 976.2 292.7 985.0 294.5C993.8 296.3 1002.0 297.7 1010.0 298.8C1018.0 299.8 1027.0 300.3 1035.0 301.0C1043.0 301.7 1052.0 302.0 1060.0 303.0C1068.0 304.0 1077.0 305.7 1085.0 307.0C1093.0 308.3 1102.0 309.6 1110.0 311.0C1118.0 312.4 1129.4 314.9 1135.0 315.5C1140.6 316.1 1141.0 315.1 1145.0 314.5C1149.0 313.9 1154.4 312.7 1160.0 312.0C1165.6 311.3 1174.4 311.1 1180.0 310.0C1185.6 308.9 1190.2 306.3 1195.0 305.0C1199.8 303.7 1205.2 302.7 1210.0 302.0C1214.8 301.3 1220.6 300.8 1225.0 300.5C1229.4 300.2 1235.5 300.1 1237.5 300.0" fill="none" stroke="#9c9a34" stroke-width="1.05" stroke-linejoin="round" />
<path d="M155.0 433.8C158.2 435.6 168.2 440.4 175.0 445.0C181.8 449.6 193.5 460.5 197.5 462.5C201.5 464.5 198.8 463.9 200.0 457.5C201.2 451.1 203.4 434.1 205.0 422.5C206.6 410.9 208.4 395.0 210.0 385.0C211.6 375.0 213.4 367.2 215.0 360.0C216.6 352.8 218.4 344.5 220.0 340.0C221.6 335.5 223.4 333.7 225.0 332.0C226.6 330.3 228.4 328.9 230.0 329.2C231.6 329.6 233.4 331.1 235.0 334.0C236.6 336.9 238.4 342.5 240.0 347.5C241.6 352.5 243.4 358.5 245.0 365.0C246.6 371.5 248.6 383.4 250.0 388.0C251.4 392.6 252.2 393.2 253.8 393.8C255.3 394.3 256.6 391.1 260.0 391.5C263.4 391.9 269.6 394.6 275.0 396.2C280.4 397.9 289.8 402.8 293.8 402.0C297.8 401.2 297.4 393.6 300.0 391.0C302.6 388.4 307.2 386.3 310.0 385.8C312.8 385.2 314.9 385.9 317.5 387.5C320.1 389.1 323.8 396.7 326.0 395.5C328.2 394.3 329.2 384.9 331.0 380.0C332.8 375.1 335.5 369.2 337.5 365.0C339.5 360.8 341.8 357.9 343.8 353.8C345.8 349.6 348.2 343.2 350.0 339.0C351.8 334.8 353.2 334.1 355.0 327.5C356.8 320.9 359.7 304.7 361.5 297.5C363.3 290.3 364.5 285.3 366.0 282.5C367.5 279.7 369.6 279.6 371.0 280.0C372.4 280.4 373.8 283.1 375.0 285.0C376.2 286.9 377.1 290.6 378.8 292.0C380.4 293.4 382.8 291.8 385.0 293.8C387.2 295.8 390.1 302.6 392.5 304.5C394.9 306.4 397.6 304.5 400.0 305.5C402.4 306.5 403.5 309.7 407.5 311.0C411.5 312.3 420.2 314.7 425.0 313.8C429.8 312.8 433.9 306.0 437.5 305.0C441.1 304.0 444.7 307.7 447.5 307.5C450.3 307.3 452.2 305.6 455.0 303.8C457.8 301.9 461.4 296.2 465.0 296.0C468.6 295.8 472.7 301.4 477.5 302.5C482.3 303.6 491.0 303.2 495.0 303.0C499.0 302.8 499.7 300.7 502.5 301.0C505.3 301.3 510.1 307.2 512.5 305.0C514.9 302.8 515.9 293.5 517.5 287.5C519.1 281.5 520.5 273.1 522.5 267.5C524.5 261.9 527.8 255.5 530.0 252.5C532.2 249.5 534.0 249.0 536.0 249.0C538.0 249.0 540.7 250.6 542.5 252.5C544.3 254.4 545.5 258.8 547.5 261.0C549.5 263.2 552.6 266.4 555.0 266.0C557.4 265.6 560.1 261.7 562.5 258.8C564.9 255.8 568.0 250.9 570.0 247.5C572.0 244.1 573.4 241.3 575.0 237.5C576.6 233.7 578.2 227.4 580.0 223.8C581.8 220.1 584.0 216.3 586.0 214.5C588.0 212.7 590.5 212.0 592.5 212.5C594.5 213.0 597.0 214.9 598.8 217.5C600.5 220.1 602.4 225.2 603.8 228.8C605.1 232.3 605.7 238.2 607.5 240.0C609.3 241.8 612.6 240.3 615.0 240.0C617.4 239.7 618.5 236.6 622.5 238.0C626.5 239.4 633.6 244.6 640.0 248.8C646.4 252.9 654.9 258.4 662.5 263.8C670.1 269.1 680.7 277.5 687.5 282.5C694.3 287.5 700.4 292.2 705.0 295.0C709.6 297.8 713.6 300.2 716.0 300.0C718.4 299.8 717.8 296.4 720.0 293.8C722.2 291.1 727.6 285.8 730.0 283.8C732.4 281.7 733.4 284.4 735.0 281.0C736.6 277.6 738.4 268.3 740.0 262.5C741.6 256.7 743.4 248.9 745.0 245.0C746.6 241.1 747.6 239.0 750.0 238.0C752.4 237.0 757.4 237.5 760.0 238.8C762.6 240.0 763.6 244.0 766.0 246.0C768.4 248.0 772.0 248.6 775.0 251.0C778.0 253.4 781.0 258.6 785.0 261.0C789.0 263.4 796.2 264.8 800.0 266.0C803.8 267.2 806.5 269.7 808.8 268.8C811.0 267.8 811.5 263.0 813.8 260.0C816.0 257.0 819.9 251.8 822.5 250.0C825.1 248.2 827.2 248.3 830.0 248.8C832.8 249.2 837.4 251.3 840.0 252.5C842.6 253.7 843.6 255.7 846.0 256.0C848.4 256.3 852.0 254.3 855.0 254.5C858.0 254.7 862.6 257.9 865.0 257.0C867.4 256.1 868.0 251.0 870.0 248.8C872.0 246.5 875.1 243.8 877.5 243.0C879.9 242.2 882.6 242.6 885.0 243.8C887.4 244.9 887.7 249.4 892.5 250.5C897.3 251.6 909.0 249.2 915.0 250.5C921.0 251.8 924.4 255.2 930.0 258.8C935.6 262.3 944.4 268.6 950.0 272.5C955.6 276.4 961.0 280.4 965.0 283.0C969.0 285.6 971.0 286.7 975.0 288.8C979.0 290.8 985.2 294.2 990.0 296.0C994.8 297.8 1001.0 299.7 1005.0 300.0C1009.0 300.3 1011.8 297.8 1015.0 298.0C1018.2 298.2 1021.4 299.7 1025.0 301.0C1028.6 302.3 1034.3 306.2 1037.5 306.0C1040.7 305.8 1042.8 300.8 1045.0 299.5C1047.2 298.2 1048.6 297.5 1051.0 298.0C1053.4 298.5 1056.6 301.4 1060.0 302.5C1063.4 303.6 1068.1 304.4 1072.5 305.0C1076.9 305.6 1083.1 304.9 1087.5 306.0C1091.9 307.1 1095.6 310.2 1100.0 312.0C1104.4 313.8 1110.2 315.9 1115.0 317.5C1119.8 319.1 1126.6 321.5 1130.0 322.0C1133.4 322.5 1134.4 323.2 1136.0 320.5C1137.6 317.8 1138.8 311.5 1140.0 305.0C1141.2 298.5 1142.3 286.8 1143.8 280.0C1145.2 273.2 1147.0 267.1 1148.8 262.5C1150.5 257.9 1152.8 253.5 1155.0 251.0C1157.2 248.5 1160.1 247.6 1162.5 247.0C1164.9 246.4 1167.6 246.1 1170.0 247.5C1172.4 248.9 1175.1 252.7 1177.5 256.0C1179.9 259.3 1183.0 267.4 1185.0 268.0C1187.0 268.6 1188.0 262.9 1190.0 260.0C1192.0 257.1 1194.7 252.5 1197.5 250.0C1200.3 247.5 1204.7 245.3 1207.5 244.5C1210.3 243.7 1212.6 244.0 1215.0 245.0C1217.4 246.0 1220.1 248.5 1222.5 251.0C1224.9 253.5 1227.6 258.7 1230.0 260.5C1232.4 262.3 1236.3 262.2 1237.5 262.5" fill="none" stroke="#9896fa" stroke-width="1.05" stroke-linejoin="round" />
<path d="M155.0 453.8C158.2 455.9 169.0 463.1 175.0 467.5C181.0 471.9 188.1 478.4 192.5 481.0C196.9 483.6 199.7 484.7 202.5 483.8C205.3 482.8 206.4 481.2 210.0 475.0C213.6 468.8 220.2 455.0 225.0 445.0C229.8 435.0 236.0 419.7 240.0 412.5C244.0 405.3 246.8 402.0 250.0 400.0C253.2 398.0 256.0 398.8 260.0 400.0C264.0 401.2 270.2 405.1 275.0 407.5C279.8 409.9 286.0 413.8 290.0 415.0C294.0 416.2 295.6 415.6 300.0 415.0C304.4 414.4 312.9 412.0 317.5 411.0C322.1 410.0 325.1 410.7 328.8 408.8C332.4 406.8 336.6 402.1 340.0 398.8C343.4 395.4 346.6 392.1 350.0 387.5C353.4 382.9 357.5 377.0 361.5 370.0C365.5 363.0 370.8 350.2 375.0 344.0C379.2 337.8 384.1 333.6 387.5 331.0C390.9 328.4 393.0 329.3 396.0 327.5C399.0 325.7 403.4 320.9 406.0 319.5C408.6 318.1 409.0 318.2 412.0 319.0C415.0 319.8 420.1 324.3 425.0 324.5C429.9 324.7 437.7 320.9 442.5 320.5C447.3 320.1 450.2 322.9 455.0 322.0C459.8 321.1 467.7 316.0 472.5 315.0C477.3 314.0 480.6 315.0 485.0 316.0C489.4 317.0 495.2 320.4 500.0 321.0C504.8 321.6 511.0 321.3 515.0 319.5C519.0 317.7 521.0 313.5 525.0 310.0C529.0 306.5 535.2 300.5 540.0 297.5C544.8 294.5 551.0 293.8 555.0 291.0C559.0 288.2 561.8 282.6 565.0 280.0C568.2 277.4 571.0 278.0 575.0 275.0C579.0 272.0 586.0 264.4 590.0 261.0C594.0 257.6 597.2 255.5 600.0 253.8C602.8 252.0 604.3 250.0 607.5 250.0C610.7 250.0 615.2 250.9 620.0 253.8C624.8 256.6 630.7 262.1 637.5 267.5C644.3 272.9 654.5 281.5 662.5 287.5C670.5 293.5 681.1 300.2 687.5 305.0C693.9 309.8 698.1 315.3 702.5 317.5C706.9 319.7 712.2 318.8 715.0 318.8C717.8 318.7 717.2 317.4 720.0 317.0C722.8 316.6 729.3 317.5 732.5 316.0C735.7 314.5 737.2 311.3 740.0 307.5C742.8 303.7 746.0 296.9 750.0 292.5C754.0 288.1 759.8 283.1 765.0 280.0C770.2 276.9 778.1 273.4 782.5 273.0C786.9 272.6 789.7 275.4 792.5 277.5C795.3 279.6 797.2 284.8 800.0 286.0C802.8 287.2 806.0 286.2 810.0 285.0C814.0 283.8 820.2 279.9 825.0 278.8C829.8 277.6 836.0 278.5 840.0 277.5C844.0 276.5 846.0 273.6 850.0 272.5C854.0 271.4 860.2 271.7 865.0 270.5C869.8 269.3 875.6 266.4 880.0 265.0C884.4 263.6 888.1 262.0 892.5 262.0C896.9 262.0 903.1 263.6 907.5 265.0C911.9 266.4 915.2 267.7 920.0 270.5C924.8 273.3 931.9 278.2 937.5 282.5C943.1 286.8 950.4 293.4 955.0 297.5C959.6 301.6 962.4 306.0 966.0 308.0C969.6 310.0 973.3 309.0 977.5 310.0C981.7 311.0 987.7 313.3 992.5 314.5C997.3 315.7 1002.7 317.0 1007.5 317.5C1012.3 318.0 1017.7 317.0 1022.5 317.5C1027.3 318.0 1032.7 320.5 1037.5 320.5C1042.3 320.5 1047.7 317.8 1052.5 317.5C1057.3 317.2 1062.3 317.6 1067.5 318.8C1072.7 319.9 1080.2 323.0 1085.0 325.0C1089.8 327.0 1092.7 329.5 1097.5 331.0C1102.3 332.5 1109.0 333.3 1115.0 334.5C1121.0 335.7 1131.0 339.3 1135.0 338.8C1139.0 338.2 1137.6 334.0 1140.0 331.0C1142.4 328.0 1146.8 322.8 1150.0 320.0C1153.2 317.2 1156.4 316.0 1160.0 313.8C1163.6 311.5 1168.9 308.6 1172.5 306.0C1176.1 303.4 1179.7 300.7 1182.5 297.5C1185.3 294.3 1187.2 288.6 1190.0 286.0C1192.8 283.4 1196.4 282.2 1200.0 281.0C1203.6 279.8 1208.9 279.6 1212.5 278.8C1216.1 277.9 1219.7 276.4 1222.5 275.5C1225.3 274.6 1227.6 272.5 1230.0 273.0C1232.4 273.5 1236.3 277.8 1237.5 278.8" fill="none" stroke="#9896fa" stroke-width="1.05" stroke-linejoin="round" />
<path d="M155.0 479.5C158.2 481.8 169.2 489.7 175.0 493.8C180.8 497.8 187.2 503.8 191.0 505.0C194.8 506.2 196.1 499.4 198.8 501.0C201.4 502.6 204.9 511.0 207.5 515.0C210.1 519.0 212.2 525.2 215.0 526.0C217.8 526.8 222.2 523.8 225.0 520.0C227.8 516.2 230.1 509.7 232.5 502.5C234.9 495.3 237.6 484.2 240.0 475.0C242.4 465.8 245.5 451.9 247.5 445.0C249.5 438.1 250.1 433.2 252.5 432.0C254.9 430.8 258.7 435.6 262.5 437.5C266.3 439.4 272.8 443.8 276.0 443.8C279.2 443.8 279.5 439.3 282.5 437.5C285.5 435.7 290.2 433.4 295.0 432.5C299.8 431.6 307.4 433.1 312.5 432.0C317.6 430.9 323.4 425.8 327.0 425.5C330.6 425.2 330.5 429.7 335.0 430.0C339.5 430.3 350.8 427.7 355.0 427.5C359.2 427.3 359.1 430.8 361.5 428.8C363.9 426.8 367.4 420.8 370.0 415.0C372.6 409.2 374.3 399.7 377.5 392.5C380.7 385.3 386.4 375.7 390.0 370.0C393.6 364.3 397.6 360.8 400.0 357.0C402.4 353.2 403.0 348.6 405.0 346.0C407.0 343.4 409.7 341.6 412.5 340.8C415.3 339.9 420.1 340.4 422.5 340.8C424.9 341.1 424.7 343.5 427.5 343.0C430.3 342.5 436.4 338.8 440.0 337.5C443.6 336.2 446.4 335.2 450.0 335.0C453.6 334.8 458.1 336.8 462.5 336.0C466.9 335.2 473.9 330.6 477.5 330.0C481.1 329.4 481.8 330.2 485.0 332.5C488.2 334.8 493.5 343.5 497.5 344.5C501.5 345.5 507.0 340.1 510.0 338.8C513.0 337.4 514.6 335.4 516.0 336.0C517.4 336.6 517.3 340.9 518.8 342.5C520.2 344.1 522.8 345.4 525.0 345.8C527.2 346.1 530.1 346.3 532.5 345.0C534.9 343.7 537.6 340.3 540.0 337.5C542.4 334.7 545.1 329.5 547.5 327.5C549.9 325.5 552.2 327.4 555.0 325.0C557.8 322.6 561.8 314.8 565.0 312.5C568.2 310.2 571.8 311.3 575.0 310.5C578.2 309.7 581.8 309.6 585.0 307.5C588.2 305.4 592.2 301.5 595.0 297.5C597.8 293.5 600.5 286.5 602.5 282.5C604.5 278.5 605.5 273.3 607.5 272.5C609.5 271.7 612.2 275.5 615.0 277.5C617.8 279.5 619.4 281.6 625.0 285.0C630.6 288.4 642.0 293.6 650.0 298.8C658.0 303.9 666.4 310.7 675.0 317.5C683.6 324.3 698.1 338.0 703.8 341.0C709.4 344.0 708.2 337.2 710.0 336.0C711.8 334.8 711.4 333.8 715.0 333.8C718.6 333.7 728.3 334.3 732.5 335.5C736.7 336.7 738.8 340.1 741.0 341.0C743.2 341.9 743.8 342.8 746.0 341.0C748.2 339.2 751.8 334.4 755.0 330.0C758.2 325.6 762.4 316.9 766.0 313.8C769.6 310.6 774.5 311.4 777.5 310.0C780.5 308.6 781.8 304.7 785.0 305.0C788.2 305.3 793.9 312.4 797.5 312.0C801.1 311.6 803.9 303.9 807.5 302.5C811.1 301.1 815.6 303.2 820.0 303.0C824.4 302.8 831.4 301.7 835.0 301.0C838.6 300.3 840.1 300.5 842.5 298.8C844.9 297.0 847.2 292.2 850.0 290.0C852.8 287.8 856.0 285.7 860.0 285.0C864.0 284.3 870.6 286.1 875.0 285.5C879.4 284.9 884.7 282.3 887.5 281.0C890.3 279.7 890.5 277.5 892.5 277.5C894.5 277.5 896.0 277.6 900.0 281.0C904.0 284.4 911.5 293.9 917.5 298.8C923.5 303.6 931.5 307.0 937.5 311.0C943.5 315.0 950.5 320.6 955.0 323.8C959.5 326.9 962.3 330.8 965.5 331.0C968.7 331.2 971.1 326.2 975.0 325.0C978.9 323.8 986.0 323.0 990.0 323.8C994.0 324.5 996.8 327.2 1000.0 329.5C1003.2 331.8 1006.0 337.5 1010.0 338.0C1014.0 338.5 1019.8 333.0 1025.0 332.5C1030.2 332.0 1036.9 335.4 1042.5 335.0C1048.1 334.6 1055.2 330.0 1060.0 330.0C1064.8 330.0 1068.5 332.2 1072.5 335.0C1076.5 337.8 1081.5 344.2 1085.0 347.5C1088.5 350.8 1091.3 355.5 1094.5 355.5C1097.7 355.5 1101.7 349.2 1105.0 347.5C1108.3 345.8 1111.8 344.8 1115.0 345.0C1118.2 345.2 1121.8 347.0 1125.0 348.8C1128.2 350.5 1132.2 353.6 1135.0 356.0C1137.8 358.4 1140.1 362.0 1142.5 363.8C1144.9 365.5 1147.2 366.8 1150.0 367.0C1152.8 367.2 1156.8 366.3 1160.0 365.0C1163.2 363.7 1167.2 361.6 1170.0 358.8C1172.8 355.9 1175.5 351.7 1177.5 347.5C1179.5 343.3 1180.9 336.9 1182.5 332.5C1184.1 328.1 1185.1 322.8 1187.5 320.0C1189.9 317.2 1193.9 316.4 1197.5 315.0C1201.1 313.6 1206.0 312.2 1210.0 311.0C1214.0 309.8 1219.3 308.5 1222.5 307.5C1225.7 306.5 1227.6 304.2 1230.0 304.5C1232.4 304.8 1236.3 308.7 1237.5 309.5" fill="none" stroke="#9896fa" stroke-width="1.05" stroke-linejoin="round" />
<path d="M107.0 434.5C109.9 434.7 118.1 434.2 125.0 436.0C131.9 437.8 142.0 442.4 150.0 446.0C158.0 449.6 168.2 455.4 175.0 458.8C181.8 462.1 188.1 465.6 192.5 467.0C196.9 468.4 199.7 468.6 202.5 467.5C205.3 466.4 206.4 464.0 210.0 460.0C213.6 456.0 220.2 446.9 225.0 442.5C229.8 438.1 235.2 435.0 240.0 432.5C244.8 430.0 249.4 428.0 255.0 427.0C260.6 426.0 269.4 426.6 275.0 426.0C280.6 425.4 284.4 424.4 290.0 423.0C295.6 421.6 303.8 418.1 310.0 417.0C316.2 415.9 324.4 417.1 328.8 416.0C333.1 414.9 334.1 412.8 337.5 410.0C340.9 407.2 346.2 402.8 350.0 398.8C353.8 394.8 357.5 389.4 361.5 385.0C365.5 380.6 370.8 374.6 375.0 371.0C379.2 367.4 383.5 365.2 387.5 362.5C391.5 359.8 396.0 356.4 400.0 354.0C404.0 351.6 408.5 349.3 412.5 347.5C416.5 345.7 419.0 345.2 425.0 343.0C431.0 340.8 442.4 336.3 450.0 333.8C457.6 331.2 466.5 328.2 472.5 327.0C478.5 325.8 483.1 326.2 487.5 326.0C491.9 325.8 496.4 326.2 500.0 326.0C503.6 325.8 507.2 325.5 510.0 324.5C512.8 323.5 514.3 321.7 517.5 319.5C520.7 317.3 526.0 313.0 530.0 311.0C534.0 309.0 538.5 308.0 542.5 307.0C546.5 306.0 550.6 307.1 555.0 305.0C559.4 302.9 565.2 297.4 570.0 293.8C574.8 290.1 580.2 285.6 585.0 282.5C589.8 279.4 596.0 276.3 600.0 274.5C604.0 272.7 606.0 271.6 610.0 271.0C614.0 270.4 620.6 270.7 625.0 271.0C629.4 271.3 632.7 271.6 637.5 273.0C642.3 274.4 649.0 277.2 655.0 279.5C661.0 281.8 667.8 284.1 675.0 287.5C682.2 290.9 693.6 297.8 700.0 300.5C706.4 303.2 709.4 303.8 715.0 304.5C720.6 305.2 730.6 305.9 735.0 305.0C739.4 304.1 739.3 301.0 742.5 298.8C745.7 296.5 750.6 292.8 755.0 291.0C759.4 289.2 765.2 288.0 770.0 287.5C774.8 287.0 780.2 287.8 785.0 288.0C789.8 288.2 796.0 288.9 800.0 288.8C804.0 288.6 806.0 288.1 810.0 287.0C814.0 285.9 819.4 283.1 825.0 282.0C830.6 280.9 838.6 281.0 845.0 280.0C851.4 279.0 859.4 276.9 865.0 275.5C870.6 274.1 875.2 272.0 880.0 271.0C884.8 270.0 890.2 269.3 895.0 269.5C899.8 269.7 905.2 270.7 910.0 272.0C914.8 273.3 919.4 275.3 925.0 277.5C930.6 279.7 939.4 283.6 945.0 286.0C950.6 288.4 955.2 290.9 960.0 292.5C964.8 294.1 969.8 294.6 975.0 296.0C980.2 297.4 987.3 299.1 992.5 301.0C997.7 302.9 1002.3 306.6 1007.5 308.0C1012.7 309.4 1019.4 309.2 1025.0 310.0C1030.6 310.8 1036.9 312.5 1042.5 313.0C1048.1 313.5 1054.4 312.4 1060.0 313.0C1065.6 313.6 1071.9 315.4 1077.5 317.0C1083.1 318.6 1089.0 321.7 1095.0 323.0C1101.0 324.3 1108.6 323.7 1115.0 325.0C1121.4 326.3 1131.0 330.4 1135.0 331.0C1139.0 331.6 1137.6 330.4 1140.0 328.8C1142.4 327.1 1146.0 323.4 1150.0 321.0C1154.0 318.6 1160.2 315.4 1165.0 313.8C1169.8 312.1 1176.0 312.1 1180.0 310.5C1184.0 308.9 1186.4 306.1 1190.0 303.8C1193.6 301.4 1198.5 297.9 1202.5 296.0C1206.5 294.1 1211.0 292.9 1215.0 292.0C1219.0 291.1 1223.9 290.7 1227.5 290.5C1231.1 290.3 1235.9 290.9 1237.5 291.0" fill="none" stroke="#22f022" stroke-width="1.15" stroke-linejoin="round" />
<path d="M107.0 434.5C109.9 435.4 118.1 436.3 125.0 440.0C131.9 443.7 142.0 452.3 150.0 457.5C158.0 462.7 168.4 468.5 175.0 472.5C181.6 476.5 187.2 481.0 191.0 482.5C194.8 484.0 196.5 484.0 198.8 482.0C201.0 480.0 202.4 475.9 205.0 470.0C207.6 464.1 211.8 451.8 215.0 445.0C218.2 438.2 221.4 432.3 225.0 427.5C228.6 422.7 233.9 417.5 237.5 415.0C241.1 412.5 243.9 412.2 247.5 412.0C251.1 411.8 255.2 412.4 260.0 413.8C264.8 415.1 273.5 419.9 277.5 420.5C281.5 421.1 282.2 417.9 285.0 417.5C287.8 417.1 291.4 419.3 295.0 418.0C298.6 416.7 302.7 410.8 307.5 409.5C312.3 408.2 321.4 410.3 325.0 410.0C328.6 409.7 327.6 409.7 330.0 407.5C332.4 405.3 336.8 399.8 340.0 396.0C343.2 392.2 347.2 387.9 350.0 383.8C352.8 379.6 355.1 374.6 357.5 370.0C359.9 365.4 362.2 359.0 365.0 355.0C367.8 351.0 371.8 347.8 375.0 345.0C378.2 342.2 381.6 339.3 385.0 337.5C388.4 335.7 393.6 334.9 396.0 333.8C398.4 332.6 398.2 331.1 400.0 330.0C401.8 328.9 403.5 327.3 407.5 327.0C411.5 326.7 420.6 328.7 425.0 328.0C429.4 327.3 430.6 323.3 435.0 322.5C439.4 321.7 448.1 323.8 452.5 323.0C456.9 322.2 459.3 318.8 462.5 317.5C465.7 316.2 468.9 315.0 472.5 315.0C476.1 315.0 480.8 316.0 485.0 317.5C489.2 319.0 495.6 323.9 498.8 324.5C501.9 325.1 502.4 321.8 505.0 321.0C507.6 320.2 512.2 322.1 515.0 319.5C517.8 316.9 519.7 308.8 522.5 305.0C525.3 301.2 529.3 297.8 532.5 296.0C535.7 294.2 538.7 293.9 542.5 293.8C546.3 293.6 552.4 296.8 556.0 295.0C559.6 293.2 562.4 285.5 565.0 282.5C567.6 279.5 569.7 279.0 572.5 276.0C575.3 273.0 579.3 266.7 582.5 263.8C585.7 260.8 588.5 258.7 592.5 257.5C596.5 256.3 603.1 255.5 607.5 256.0C611.9 256.5 615.2 258.3 620.0 260.5C624.8 262.7 630.7 265.7 637.5 270.0C644.3 274.3 654.5 281.9 662.5 287.5C670.5 293.1 680.9 300.1 687.5 305.0C694.1 309.9 700.0 316.2 703.8 318.0C707.5 319.8 709.0 316.1 711.0 316.0C713.0 315.9 713.8 318.3 716.0 317.5C718.2 316.7 721.8 312.6 725.0 311.0C728.2 309.4 733.2 310.1 736.0 307.5C738.8 304.9 739.9 298.6 742.5 295.0C745.1 291.4 749.3 287.4 752.5 285.0C755.7 282.6 758.9 280.8 762.5 280.0C766.1 279.2 771.0 279.4 775.0 280.0C779.0 280.6 783.7 282.4 787.5 283.8C791.3 285.1 795.1 288.6 798.8 288.8C802.4 288.9 806.6 286.6 810.0 285.0C813.4 283.4 816.8 280.4 820.0 278.8C823.2 277.1 826.2 275.3 830.0 275.0C833.8 274.7 840.5 277.4 843.8 277.0C847.0 276.6 847.4 273.7 850.0 272.5C852.6 271.3 857.2 269.8 860.0 269.5C862.8 269.2 865.1 271.2 867.5 270.5C869.9 269.8 871.4 266.2 875.0 265.0C878.6 263.8 885.6 262.6 890.0 263.0C894.4 263.4 898.1 265.6 902.5 267.5C906.9 269.4 911.9 272.0 917.5 275.0C923.1 278.0 931.5 282.0 937.5 286.0C943.5 290.0 950.4 296.5 955.0 300.0C959.6 303.5 962.4 306.7 966.0 308.0C969.6 309.3 973.3 307.5 977.5 308.0C981.7 308.5 987.7 309.3 992.5 311.0C997.3 312.7 1003.1 317.8 1007.5 318.8C1011.9 319.7 1016.0 317.0 1020.0 317.0C1024.0 317.0 1029.3 317.9 1032.5 318.8C1035.7 319.6 1038.0 322.0 1040.0 322.0C1042.0 322.0 1042.2 319.7 1045.0 318.8C1047.8 317.8 1053.1 315.6 1057.5 316.0C1061.9 316.4 1068.1 319.2 1072.5 321.0C1076.9 322.8 1081.2 325.2 1085.0 327.0C1088.8 328.8 1092.4 332.2 1096.0 332.5C1099.6 332.8 1103.7 328.8 1107.5 329.0C1111.3 329.2 1115.6 332.0 1120.0 333.8C1124.4 335.5 1131.8 340.4 1135.0 340.0C1138.2 339.6 1138.0 334.6 1140.0 331.0C1142.0 327.4 1145.1 321.1 1147.5 317.5C1149.9 313.9 1152.2 310.9 1155.0 308.8C1157.8 306.6 1161.4 304.8 1165.0 303.8C1168.6 302.7 1174.7 302.8 1177.5 302.0C1180.3 301.2 1180.9 300.9 1182.5 298.8C1184.1 296.6 1185.1 291.4 1187.5 288.8C1189.9 286.1 1194.3 284.1 1197.5 282.5C1200.7 280.9 1204.3 279.7 1207.5 279.0C1210.7 278.3 1214.3 277.7 1217.5 278.0C1220.7 278.3 1224.3 279.8 1227.5 281.0C1230.7 282.2 1235.9 284.8 1237.5 285.5" fill="none" stroke="#f4f044" stroke-width="1.15" stroke-linejoin="round" />
<g stroke="#ff2a1e" stroke-width="2.2">
<line x1="193.8" y1="476.0" x2="193.8" y2="499.0"/>
<line x1="200.8" y1="455.0" x2="200.8" y2="477.5"/>
<line x1="203.8" y1="430.0" x2="203.8" y2="452.5"/>
<line x1="206.2" y1="404.5" x2="206.2" y2="427.5"/>
<line x1="214.0" y1="383.8" x2="214.0" y2="405.5"/>
<line x1="279.0" y1="408.0" x2="279.0" y2="430.5"/>
<line x1="297.0" y1="395.0" x2="297.0" y2="417.0"/>
<line x1="328.8" y1="393.8" x2="328.8" y2="416.0"/>
<line x1="332.0" y1="368.0" x2="332.0" y2="390.5"/>
<line x1="345.0" y1="351.0" x2="345.0" y2="374.0"/>
<line x1="356.8" y1="333.8" x2="356.8" y2="356.0"/>
<line x1="360.0" y1="309.5" x2="360.0" y2="332.0"/>
<line x1="396.8" y1="311.0" x2="396.8" y2="333.0"/>
<line x1="430.0" y1="310.0" x2="430.0" y2="333.0"/>
<line x1="455.0" y1="303.8" x2="455.0" y2="325.8"/>
<line x1="500.8" y1="311.0" x2="500.8" y2="335.0"/>
<line x1="515.5" y1="299.0" x2="515.5" y2="319.0"/>
<line x1="517.5" y1="271.0" x2="517.5" y2="294.0"/>
<line x1="557.5" y1="276.0" x2="557.5" y2="299.0"/>
<line x1="560.8" y1="250.0" x2="560.8" y2="274.0"/>
<line x1="576.0" y1="235.0" x2="576.0" y2="258.0"/>
<line x1="707.0" y1="312.0" x2="707.0" y2="335.0"/>
<line x1="719.5" y1="296.0" x2="719.5" y2="317.5"/>
<line x1="737.0" y1="281.0" x2="737.0" y2="303.8"/>
<line x1="740.0" y1="256.0" x2="740.0" y2="278.8"/>
<line x1="800.0" y1="277.5" x2="800.0" y2="300.0"/>
<line x1="813.0" y1="260.5" x2="813.0" y2="283.0"/>
<line x1="845.0" y1="258.0" x2="845.0" y2="280.5"/>
<line x1="868.0" y1="249.5" x2="868.0" y2="271.0"/>
<line x1="969.0" y1="302.5" x2="969.0" y2="325.0"/>
<line x1="1011.0" y1="309.5" x2="1011.0" y2="332.0"/>
<line x1="1042.0" y1="306.0" x2="1042.0" y2="328.8"/>
<line x1="1097.0" y1="323.0" x2="1097.0" y2="345.8"/>
<line x1="1137.0" y1="327.0" x2="1137.0" y2="350.0"/>
<line x1="1140.0" y1="302.5" x2="1140.0" y2="324.5"/>
<line x1="1142.0" y1="277.0" x2="1142.0" y2="300.0"/>
<line x1="1183.0" y1="281.0" x2="1183.0" y2="304.5"/>
<line x1="1185.0" y1="256.0" x2="1185.0" y2="278.8"/>
</g>
<path d="M107.0 590.5C109.9 591.4 118.1 593.3 125.0 596.0C131.9 598.7 142.0 604.1 150.0 607.5C158.0 610.9 167.4 615.0 175.0 617.0C182.6 619.0 192.7 621.9 197.5 620.0C202.3 618.1 202.6 611.8 205.0 605.0C207.4 598.2 210.1 585.9 212.5 577.5C214.9 569.1 217.6 558.3 220.0 552.5C222.4 546.7 225.1 543.3 227.5 541.0C229.9 538.7 232.2 537.6 235.0 538.0C237.8 538.4 241.4 540.6 245.0 543.8C248.6 546.9 252.7 551.7 257.5 557.5C262.3 563.3 269.8 575.5 275.0 580.0C280.2 584.5 285.2 585.5 290.0 585.5C294.8 585.5 300.6 581.1 305.0 580.0C309.4 578.9 313.9 578.4 317.5 578.8C321.1 579.1 323.9 583.9 327.5 582.5C331.1 581.1 336.0 574.0 340.0 570.0C344.0 566.0 348.9 561.5 352.5 557.5C356.1 553.5 359.7 548.8 362.5 545.0C365.3 541.2 367.6 535.8 370.0 533.8C372.4 531.7 374.7 530.8 377.5 532.0C380.3 533.2 383.9 538.2 387.5 541.0C391.1 543.8 396.0 546.9 400.0 549.5C404.0 552.1 408.1 554.2 412.5 557.5C416.9 560.8 422.7 567.4 427.5 570.0C432.3 572.6 438.5 572.6 442.5 573.8C446.5 574.9 448.9 576.7 452.5 577.0C456.1 577.3 461.0 575.0 465.0 575.5C469.0 576.0 473.5 578.2 477.5 580.0C481.5 581.8 486.0 584.9 490.0 587.0C494.0 589.1 498.9 592.5 502.5 593.0C506.1 593.5 509.7 591.7 512.5 590.0C515.3 588.3 517.6 585.7 520.0 582.5C522.4 579.3 525.1 572.8 527.5 570.0C529.9 567.2 532.6 565.9 535.0 565.0C537.4 564.1 540.1 563.9 542.5 564.5C544.9 565.1 547.6 567.5 550.0 568.8C552.4 570.0 554.7 572.9 557.5 572.5C560.3 572.1 564.3 568.4 567.5 566.0C570.7 563.6 574.3 559.7 577.5 557.5C580.7 555.3 584.3 553.1 587.5 552.5C590.7 551.9 594.3 552.1 597.5 553.8C600.7 555.4 603.9 558.9 607.5 562.5C611.1 566.1 616.0 571.8 620.0 576.0C624.0 580.2 628.5 584.9 632.5 588.8C636.5 592.6 640.6 596.6 645.0 600.0C649.4 603.4 655.2 607.4 660.0 610.0C664.8 612.6 670.2 614.3 675.0 616.0C679.8 617.7 685.4 619.4 690.0 620.5C694.6 621.6 700.5 623.1 703.8 623.0C707.0 622.9 707.0 622.5 710.0 620.0C713.0 617.5 718.5 611.7 722.5 607.5C726.5 603.3 731.8 598.1 735.0 593.8C738.2 589.4 740.1 584.0 742.5 580.0C744.9 576.0 747.6 571.5 750.0 568.8C752.4 566.0 755.1 563.9 757.5 563.0C759.9 562.1 762.2 561.9 765.0 563.0C767.8 564.1 771.4 567.1 775.0 570.0C778.6 572.9 783.5 577.8 787.5 581.0C791.5 584.2 796.4 588.6 800.0 590.0C803.6 591.4 806.8 590.9 810.0 589.5C813.2 588.1 816.8 582.7 820.0 581.0C823.2 579.3 826.4 578.8 830.0 578.8C833.6 578.8 838.5 580.8 842.5 581.0C846.5 581.2 851.0 580.2 855.0 580.0C859.0 579.8 863.5 580.4 867.5 580.0C871.5 579.6 876.4 577.7 880.0 577.5C883.6 577.3 886.4 577.5 890.0 578.8C893.6 580.0 898.5 582.5 902.5 585.5C906.5 588.5 910.6 594.0 915.0 597.5C919.4 601.0 925.2 604.9 930.0 607.5C934.8 610.1 939.3 611.6 945.0 613.8C950.7 615.9 960.7 620.8 965.5 621.0C970.3 621.2 971.5 617.0 975.0 615.0C978.5 613.0 983.5 610.0 987.5 608.8C991.5 607.5 996.6 607.4 1000.0 607.5C1003.4 607.6 1006.0 610.1 1008.8 609.5C1011.5 608.9 1014.5 605.5 1017.5 603.8C1020.5 602.0 1024.1 599.4 1027.5 598.8C1030.9 598.1 1035.5 600.7 1038.8 600.0C1042.0 599.3 1044.1 595.9 1047.5 594.5C1050.9 593.1 1056.0 590.9 1060.0 591.0C1064.0 591.1 1068.5 593.4 1072.5 595.0C1076.5 596.6 1081.4 599.2 1085.0 601.0C1088.6 602.8 1091.8 606.0 1095.0 606.0C1098.2 606.0 1101.4 602.2 1105.0 601.0C1108.6 599.8 1112.7 598.5 1117.5 598.8C1122.3 599.0 1131.0 603.5 1135.0 602.5C1139.0 601.5 1140.1 596.7 1142.5 592.5C1144.9 588.3 1147.6 580.2 1150.0 576.0C1152.4 571.8 1155.1 568.2 1157.5 566.0C1159.9 563.8 1162.6 563.0 1165.0 562.5C1167.4 562.0 1169.9 562.1 1172.5 563.0C1175.1 563.9 1178.2 568.2 1181.0 568.0C1183.8 567.8 1187.0 563.8 1190.0 562.0C1193.0 560.2 1196.8 557.3 1200.0 557.0C1203.2 556.7 1206.8 558.3 1210.0 560.0C1213.2 561.7 1216.8 564.7 1220.0 567.5C1223.2 570.3 1227.2 574.7 1230.0 577.5C1232.8 580.3 1236.3 583.8 1237.5 585.0" fill="none" stroke="#2ee62e" stroke-width="1.05" stroke-linejoin="round" />
<path d="M107.0 590.5C109.9 592.0 118.1 596.7 125.0 600.0C131.9 603.3 142.0 608.0 150.0 611.0C158.0 614.0 168.2 616.9 175.0 618.8C181.8 620.6 188.7 624.3 192.5 622.5C196.3 620.7 196.8 614.7 198.8 607.5C200.8 600.3 203.0 587.1 205.0 577.5C207.0 567.9 209.0 554.7 211.0 547.5C213.0 540.3 215.5 535.7 217.5 532.5C219.5 529.3 221.8 527.9 223.8 527.5C225.8 527.1 227.4 527.2 230.0 530.0C232.6 532.8 236.8 539.8 240.0 545.0C243.2 550.2 246.4 557.3 250.0 562.5C253.6 567.7 258.5 572.9 262.5 577.5C266.5 582.1 271.4 589.5 275.0 591.0C278.6 592.5 282.0 587.8 285.0 587.0C288.0 586.2 291.4 587.3 293.8 586.0C296.1 584.7 298.0 580.4 300.0 578.8C302.0 577.1 303.6 575.3 306.0 575.5C308.4 575.7 311.8 578.0 315.0 580.0C318.2 582.0 323.2 589.6 326.0 588.0C328.8 586.4 330.3 574.5 332.5 570.0C334.7 565.5 337.6 563.2 340.0 560.0C342.4 556.8 345.1 552.0 347.5 550.0C349.9 548.0 352.8 550.7 355.0 547.5C357.2 544.3 359.5 533.7 361.5 530.0C363.5 526.3 365.5 524.9 367.5 524.5C369.5 524.1 371.4 525.0 373.8 527.5C376.1 530.0 379.1 535.2 382.5 540.0C385.9 544.8 391.6 554.9 395.0 557.5C398.4 560.1 400.9 555.2 403.8 556.0C406.6 556.8 408.7 558.7 412.5 562.5C416.3 566.3 423.9 578.2 427.5 580.0C431.1 581.8 432.6 574.5 435.0 573.8C437.4 573.0 439.7 573.7 442.5 575.0C445.3 576.3 449.5 582.1 452.5 582.0C455.5 581.9 457.8 575.1 461.0 574.5C464.2 573.9 468.7 575.7 472.5 578.0C476.3 580.3 481.0 585.3 485.0 588.8C489.0 592.2 494.3 599.1 497.5 599.5C500.7 599.9 502.4 592.9 505.0 591.0C507.6 589.1 511.6 590.9 513.8 587.5C516.0 584.1 517.0 574.4 518.8 570.0C520.5 565.6 523.0 562.0 525.0 560.0C527.0 558.0 528.6 557.1 531.0 557.5C533.4 557.9 537.0 559.9 540.0 562.5C543.0 565.1 547.5 571.0 550.0 573.8C552.5 576.5 553.7 580.7 555.5 579.5C557.3 578.3 559.1 569.3 561.0 566.0C562.9 562.7 565.7 560.2 567.5 558.8C569.3 557.3 570.9 558.5 572.5 557.0C574.1 555.5 575.7 551.1 577.5 549.5C579.3 547.9 581.8 546.8 583.8 547.0C585.8 547.2 587.4 548.8 590.0 551.0C592.6 553.2 596.4 556.8 600.0 561.0C603.6 565.2 608.5 572.7 612.5 577.5C616.5 582.3 621.0 587.0 625.0 591.0C629.0 595.0 633.5 599.5 637.5 602.5C641.5 605.5 646.0 608.0 650.0 610.0C654.0 612.0 658.5 613.4 662.5 615.0C666.5 616.6 670.6 618.7 675.0 620.0C679.4 621.3 685.4 622.1 690.0 623.0C694.6 623.9 700.8 626.6 703.8 625.5C706.8 624.4 706.5 618.9 708.8 616.0C711.0 613.1 714.9 611.3 717.5 607.5C720.1 603.7 722.2 596.9 725.0 592.5C727.8 588.1 732.4 584.4 735.0 580.0C737.6 575.6 739.0 568.8 741.0 565.0C743.0 561.2 745.5 557.5 747.5 556.0C749.5 554.5 751.4 554.5 753.8 555.5C756.1 556.5 759.1 559.4 762.5 562.5C765.9 565.6 771.0 571.1 775.0 575.0C779.0 578.9 783.5 584.0 787.5 587.0C791.5 590.0 796.6 593.5 800.0 593.8C803.4 594.0 806.4 591.3 808.8 588.8C811.1 586.2 813.0 580.3 815.0 578.0C817.0 575.7 818.6 574.7 821.0 574.5C823.4 574.3 826.6 575.2 830.0 577.0C833.4 578.8 839.3 585.7 842.5 586.0C845.7 586.3 847.2 579.7 850.0 578.8C852.8 577.8 857.6 579.4 860.0 580.0C862.4 580.6 863.0 583.2 865.0 582.5C867.0 581.8 870.3 576.8 872.5 575.5C874.7 574.2 876.0 573.8 878.8 574.5C881.5 575.2 886.6 577.9 890.0 580.0C893.4 582.1 896.4 584.3 900.0 587.5C903.6 590.7 908.5 596.6 912.5 600.0C916.5 603.4 920.6 606.4 925.0 608.8C929.4 611.1 935.2 613.2 940.0 615.0C944.8 616.8 950.9 618.8 955.0 620.0C959.1 621.2 962.7 624.1 965.5 622.5C968.3 620.9 969.8 612.9 972.5 610.0C975.2 607.1 978.9 605.1 982.5 604.5C986.1 603.9 991.0 605.0 995.0 606.0C999.0 607.0 1004.5 611.6 1007.5 611.0C1010.5 610.4 1011.4 604.7 1013.8 602.5C1016.1 600.3 1018.7 597.7 1022.5 597.5C1026.3 597.3 1033.9 601.8 1037.5 601.0C1041.1 600.2 1042.2 594.2 1045.0 592.5C1047.8 590.8 1051.4 590.1 1055.0 590.5C1058.6 590.9 1063.1 592.9 1067.5 595.0C1071.9 597.1 1078.3 601.3 1082.5 603.8C1086.7 606.2 1090.8 611.1 1093.8 610.5C1096.7 609.9 1098.0 602.1 1101.0 600.0C1104.0 597.9 1108.7 597.3 1112.5 597.5C1116.3 597.7 1121.4 599.6 1125.0 601.0C1128.6 602.4 1132.6 607.8 1135.0 606.0C1137.4 604.2 1138.4 596.2 1140.0 590.0C1141.6 583.8 1143.4 572.9 1145.0 567.5C1146.6 562.1 1148.0 558.2 1150.0 556.0C1152.0 553.8 1155.1 553.3 1157.5 553.8C1159.9 554.2 1162.6 556.8 1165.0 558.8C1167.4 560.7 1170.1 563.5 1172.5 566.0C1174.9 568.5 1177.8 575.5 1180.0 574.5C1182.2 573.5 1183.8 563.5 1186.0 560.0C1188.2 556.5 1191.3 553.3 1193.8 552.5C1196.2 551.7 1198.4 553.0 1201.0 555.0C1203.6 557.0 1207.0 561.6 1210.0 565.0C1213.0 568.4 1216.8 572.5 1220.0 576.0C1223.2 579.5 1227.2 584.4 1230.0 587.0C1232.8 589.6 1236.3 591.6 1237.5 592.5" fill="none" stroke="#ffffff" stroke-width="1.05" stroke-linejoin="round" />
<path d="M107.0 716.0L188.8 716.0L193.8 675.5L198.8 677.5L201.0 660.0L206.0 645.0L210.0 648.8L213.8 645.5L220.0 650.0L250.0 672.5L276.0 685.5L278.0 663.8L293.8 674.5L296.0 660.0L326.0 680.5L330.0 652.5L341.0 658.0L345.0 651.0L353.8 657.5L358.8 646.0L392.5 667.5L396.0 656.0L427.0 677.0L429.5 660.0L452.0 676.0L454.5 660.5L497.5 688.0L500.5 666.0L512.5 673.8L517.0 650.5L555.5 674.5L558.8 650.5L572.5 658.0L575.0 651.0L600.0 670.0L625.0 687.5L650.0 699.5L675.0 706.0L703.8 711.5L706.0 674.5L716.0 680.0L719.5 662.5L733.8 673.0L739.5 650.5L797.5 688.0L799.5 665.0L809.5 672.5L812.5 659.5L842.5 678.8L845.0 662.0L865.0 674.5L868.0 660.5L900.0 682.5L925.0 695.0L950.0 705.0L965.0 708.8L968.0 673.8L1008.8 696.0L1011.0 669.5L1038.8 686.0L1041.0 665.5L1094.5 698.0L1097.0 669.5L1133.8 691.0L1137.5 662.5L1141.0 647.5L1178.8 672.0L1183.8 649.5L1237.5 685.5" fill="none" stroke="#1e8c1e" stroke-width="1.05" stroke-linejoin="round" />
<path d="M190.5 625.0L191.0 640.0L193.8 670.0L198.8 672.5L200.0 685.0L205.0 698.8L210.0 698.0L215.0 703.8L225.0 697.5L250.0 678.8L276.0 659.5L278.0 683.8L293.8 673.8L296.0 688.8L326.0 667.5L330.0 695.0L341.0 690.5L345.0 697.5L353.8 691.0L357.5 700.5L361.5 703.0L392.5 681.0L397.5 692.5L427.0 671.0L429.5 687.5L432.5 688.8L452.5 672.5L455.0 688.8L497.5 658.0L500.5 682.5L512.5 675.0L517.5 698.0L556.0 670.0L560.0 696.0L573.8 689.5L576.0 697.0L585.0 692.5L600.0 680.0L625.0 661.0L650.0 645.5L675.0 635.5L703.8 630.0L707.0 672.5L716.0 668.0L719.5 686.0L733.8 677.0L737.5 695.0L740.0 698.0L797.5 657.0L800.0 682.5L809.5 677.0L813.0 690.0L843.0 670.0L845.5 687.5L865.0 673.8L868.0 689.5L900.0 667.5L930.0 646.0L950.0 638.8L965.5 634.5L968.5 671.0L971.0 673.5L1008.8 648.8L1011.0 678.8L1038.8 661.0L1042.0 683.8L1095.0 648.8L1097.5 680.0L1135.0 653.8L1138.0 690.0L1141.0 698.0L1180.0 672.5L1183.8 695.0L1187.5 696.0L1237.5 659.5" fill="none" stroke="#ff2a22" stroke-width="1.05" stroke-linejoin="round" />
<path d="M190.5 625.0C191.2 627.0 193.1 633.9 195.0 637.5C196.9 641.1 199.7 645.5 202.5 647.5C205.3 649.5 208.9 648.8 212.5 650.0C216.1 651.2 221.0 653.0 225.0 655.0C229.0 657.0 233.5 659.3 237.5 662.5C241.5 665.7 246.0 671.4 250.0 675.0C254.0 678.6 258.5 682.8 262.5 685.0C266.5 687.2 271.4 687.8 275.0 688.8C278.6 689.7 281.8 689.8 285.0 691.0C288.2 692.2 291.4 695.3 295.0 696.0C298.6 696.7 303.5 694.9 307.5 695.5C311.5 696.1 316.4 699.4 320.0 700.0C323.6 700.6 326.8 700.7 330.0 699.5C333.2 698.3 336.8 694.3 340.0 692.5C343.2 690.7 346.6 689.8 350.0 688.0C353.4 686.2 357.9 682.8 361.5 681.0C365.1 679.2 369.1 677.6 372.5 677.0C375.9 676.4 378.9 676.2 382.5 677.0C386.1 677.8 391.4 681.1 395.0 682.0C398.6 682.9 402.2 682.0 405.0 682.5C407.8 683.0 408.9 683.3 412.5 685.0C416.1 686.7 423.5 691.6 427.5 693.0C431.5 694.4 433.7 692.7 437.5 693.8C441.3 694.8 446.6 698.9 451.0 699.5C455.4 700.1 460.0 697.1 465.0 697.5C470.0 697.9 477.3 701.8 482.5 702.0C487.7 702.2 492.5 698.9 497.5 698.8C502.5 698.6 509.8 701.8 513.8 701.0C517.8 700.2 519.1 695.4 522.5 693.8C525.9 692.1 531.4 690.5 535.0 690.5C538.6 690.5 541.8 692.4 545.0 693.8C548.2 695.1 551.8 699.0 555.0 698.8C558.2 698.5 561.0 694.5 565.0 692.5C569.0 690.5 576.0 687.3 580.0 686.0C584.0 684.7 586.4 684.1 590.0 684.5C593.6 684.9 598.5 686.9 602.5 688.8C606.5 690.6 611.0 694.8 615.0 696.0C619.0 697.2 623.5 696.6 627.5 696.0C631.5 695.4 636.0 694.3 640.0 692.5C644.0 690.7 648.5 687.8 652.5 685.0C656.5 682.2 661.0 678.0 665.0 675.0C669.0 672.0 673.5 668.8 677.5 666.0C681.5 663.2 685.8 659.9 690.0 657.5C694.2 655.1 700.5 649.8 703.8 651.0C707.0 652.2 707.4 661.6 710.0 665.0C712.6 668.4 716.0 669.7 720.0 672.5C724.0 675.3 730.2 681.5 735.0 682.5C739.8 683.5 745.6 678.8 750.0 678.8C754.4 678.8 757.7 680.1 762.5 682.5C767.3 684.9 774.4 692.0 780.0 693.8C785.6 695.5 792.7 693.1 797.5 693.8C802.3 694.4 806.4 697.3 810.0 697.5C813.6 697.7 815.2 694.5 820.0 695.0C824.8 695.5 834.4 699.8 840.0 700.5C845.6 701.2 851.0 699.3 855.0 699.5C859.0 699.7 861.0 702.0 865.0 702.0C869.0 702.0 874.8 699.2 880.0 699.5C885.2 699.8 891.9 704.0 897.5 703.8C903.1 703.5 909.8 700.6 915.0 698.0C920.2 695.4 925.2 691.0 930.0 687.5C934.8 684.0 939.3 680.1 945.0 676.0C950.7 671.9 961.5 662.6 965.5 662.0C969.5 661.4 967.7 669.2 970.0 672.0C972.3 674.8 976.4 677.8 980.0 679.5C983.6 681.2 988.0 682.7 992.5 682.5C997.0 682.3 1004.6 677.9 1008.0 678.0C1011.4 678.1 1011.0 680.9 1013.8 683.0C1016.5 685.1 1020.8 689.5 1025.0 691.0C1029.2 692.5 1035.2 691.3 1040.0 692.5C1044.8 693.7 1051.0 697.5 1055.0 698.8C1059.0 700.0 1061.0 700.9 1065.0 700.5C1069.0 700.1 1075.2 698.1 1080.0 696.0C1084.8 693.9 1091.4 688.1 1095.0 687.5C1098.6 686.9 1099.3 690.9 1102.5 692.5C1105.7 694.1 1111.0 697.0 1115.0 697.5C1119.0 698.0 1123.9 696.4 1127.5 695.5C1131.1 694.6 1133.9 693.7 1137.5 692.0C1141.1 690.3 1146.0 686.2 1150.0 685.0C1154.0 683.8 1158.9 683.9 1162.5 684.5C1166.1 685.1 1169.7 687.3 1172.5 688.8C1175.3 690.2 1176.8 694.0 1180.0 693.8C1183.2 693.5 1188.9 688.2 1192.5 687.0C1196.1 685.8 1199.3 685.4 1202.5 686.0C1205.7 686.6 1208.9 688.7 1212.5 690.5C1216.1 692.3 1221.0 696.0 1225.0 697.0C1229.0 698.0 1235.5 697.0 1237.5 697.0" fill="none" stroke="#ffffff" stroke-width="1.05" stroke-linejoin="round" />
<line x1="107" y1="213.5" x2="1243.5" y2="213.5" stroke="#d23cd2" stroke-width="1.4"/>
<line x1="361.5" y1="213" x2="361.5" y2="716" stroke="#d23cd2" stroke-width="1.4"/>
<line x1="107" y1="213" x2="107" y2="521" stroke="#ff1e1e" stroke-width="2.4"/>
<line x1="107" y1="521" x2="107" y2="625" stroke="#1e8c1e" stroke-width="1.6"/>
<line x1="107" y1="625" x2="107" y2="717" stroke="#e23ce2" stroke-width="2.4"/>
<line x1="106" y1="716.5" x2="1239" y2="716.5" stroke="#ff1414" stroke-width="3"/>
<g stroke="#c8c8c8" stroke-width="1"><line x1="103.5" y1="217.5" x2="106" y2="217.5"/><line x1="103.5" y1="222.5" x2="106" y2="222.5"/><line x1="103.5" y1="227.5" x2="106" y2="227.5"/><line x1="101.5" y1="232.5" x2="106" y2="232.5"/><line x1="103.5" y1="237.5" x2="106" y2="237.5"/><line x1="103.5" y1="242.5" x2="106" y2="242.5"/><line x1="103.5" y1="247.5" x2="106" y2="247.5"/><line x1="101.5" y1="252.5" x2="106" y2="252.5"/><line x1="103.5" y1="257.5" x2="106" y2="257.5"/><line x1="103.5" y1="262.5" x2="106" y2="262.5"/><line x1="103.5" y1="267.5" x2="106" y2="267.5"/><line x1="101.5" y1="272.5" x2="106" y2="272.5"/><line x1="103.5" y1="277.5" x2="106" y2="277.5"/><line x1="103.5" y1="282.5" x2="106" y2="282.5"/><line x1="103.5" y1="287.5" x2="106" y2="287.5"/><line x1="101.5" y1="292.5" x2="106" y2="292.5"/><line x1="103.5" y1="297.5" x2="106" y2="297.5"/><line x1="103.5" y1="302.5" x2="106" y2="302.5"/><line x1="103.5" y1="307.5" x2="106" y2="307.5"/><line x1="101.5" y1="312.5" x2="106" y2="312.5"/><line x1="103.5" y1="317.5" x2="106" y2="317.5"/><line x1="103.5" y1="322.5" x2="106" y2="322.5"/><line x1="103.5" y1="327.5" x2="106" y2="327.5"/><line x1="101.5" y1="332.5" x2="106" y2="332.5"/><line x1="103.5" y1="337.5" x2="106" y2="337.5"/><line x1="103.5" y1="342.5" x2="106" y2="342.5"/><line x1="103.5" y1="347.5" x2="106" y2="347.5"/><line x1="101.5" y1="352.5" x2="106" y2="352.5"/><line x1="103.5" y1="357.5" x2="106" y2="357.5"/><line x1="103.5" y1="362.5" x2="106" y2="362.5"/><line x1="103.5" y1="367.5" x2="106" y2="367.5"/><line x1="101.5" y1="372.5" x2="106" y2="372.5"/><line x1="103.5" y1="377.5" x2="106" y2="377.5"/><line x1="103.5" y1="382.5" x2="106" y2="382.5"/><line x1="103.5" y1="387.5" x2="106" y2="387.5"/><line x1="101.5" y1="392.5" x2="106" y2="392.5"/><line x1="103.5" y1="397.5" x2="106" y2="397.5"/><line x1="103.5" y1="402.5" x2="106" y2="402.5"/><line x1="103.5" y1="407.5" x2="106" y2="407.5"/><line x1="101.5" y1="412.5" x2="106" y2="412.5"/><line x1="103.5" y1="417.5" x2="106" y2="417.5"/><line x1="103.5" y1="422.5" x2="106" y2="422.5"/><line x1="103.5" y1="427.5" x2="106" y2="427.5"/><line x1="101.5" y1="432.5" x2="106" y2="432.5"/><line x1="103.5" y1="437.5" x2="106" y2="437.5"/><line x1="103.5" y1="442.5" x2="106" y2="442.5"/><line x1="103.5" y1="447.5" x2="106" y2="447.5"/><line x1="101.5" y1="452.5" x2="106" y2="452.5"/><line x1="103.5" y1="457.5" x2="106" y2="457.5"/><line x1="103.5" y1="462.5" x2="106" y2="462.5"/><line x1="103.5" y1="467.5" x2="106" y2="467.5"/><line x1="101.5" y1="472.5" x2="106" y2="472.5"/><line x1="103.5" y1="477.5" x2="106" y2="477.5"/><line x1="103.5" y1="482.5" x2="106" y2="482.5"/><line x1="103.5" y1="487.5" x2="106" y2="487.5"/><line x1="101.5" y1="492.5" x2="106" y2="492.5"/><line x1="103.5" y1="497.5" x2="106" y2="497.5"/><line x1="103.5" y1="502.5" x2="106" y2="502.5"/><line x1="103.5" y1="507.5" x2="106" y2="507.5"/><line x1="101.5" y1="512.5" x2="106" y2="512.5"/><line x1="103.5" y1="517.5" x2="106" y2="517.5"/></g>
<g stroke="#8c8c8c" stroke-width="1"><line x1="103.5" y1="530.5" x2="106" y2="530.5"/><line x1="101.5" y1="536.0" x2="106" y2="536.0"/><line x1="103.5" y1="541.4" x2="106" y2="541.4"/><line x1="103.5" y1="546.9" x2="106" y2="546.9"/><line x1="103.5" y1="552.3" x2="106" y2="552.3"/><line x1="103.5" y1="557.8" x2="106" y2="557.8"/><line x1="101.5" y1="563.2" x2="106" y2="563.2"/><line x1="103.5" y1="568.7" x2="106" y2="568.7"/><line x1="103.5" y1="574.1" x2="106" y2="574.1"/><line x1="103.5" y1="579.6" x2="106" y2="579.6"/><line x1="103.5" y1="585.0" x2="106" y2="585.0"/><line x1="101.5" y1="590.5" x2="106" y2="590.5"/><line x1="103.5" y1="595.9" x2="106" y2="595.9"/><line x1="103.5" y1="601.4" x2="106" y2="601.4"/><line x1="103.5" y1="606.8" x2="106" y2="606.8"/><line x1="103.5" y1="612.3" x2="106" y2="612.3"/><line x1="101.5" y1="617.7" x2="106" y2="617.7"/></g>
<g stroke="#c8c8c8" stroke-width="1"><line x1="101.5" y1="625.5" x2="106" y2="625.5"/><line x1="103.5" y1="630.0" x2="106" y2="630.0"/><line x1="103.5" y1="634.6" x2="106" y2="634.6"/><line x1="103.5" y1="639.1" x2="106" y2="639.1"/><line x1="101.5" y1="643.7" x2="106" y2="643.7"/><line x1="103.5" y1="648.2" x2="106" y2="648.2"/><line x1="103.5" y1="652.8" x2="106" y2="652.8"/><line x1="103.5" y1="657.3" x2="106" y2="657.3"/><line x1="101.5" y1="661.9" x2="106" y2="661.9"/><line x1="103.5" y1="666.4" x2="106" y2="666.4"/><line x1="103.5" y1="671.0" x2="106" y2="671.0"/><line x1="103.5" y1="675.5" x2="106" y2="675.5"/><line x1="101.5" y1="680.1" x2="106" y2="680.1"/><line x1="103.5" y1="684.6" x2="106" y2="684.6"/><line x1="103.5" y1="689.2" x2="106" y2="689.2"/><line x1="103.5" y1="693.7" x2="106" y2="693.7"/><line x1="101.5" y1="698.3" x2="106" y2="698.3"/><line x1="103.5" y1="702.8" x2="106" y2="702.8"/><line x1="103.5" y1="707.4" x2="106" y2="707.4"/><line x1="103.5" y1="711.9" x2="106" y2="711.9"/><line x1="101.5" y1="716.5" x2="106" y2="716.5"/></g>
<g font-family="'DejaVu Sans','Liberation Sans',sans-serif" font-size="11" fill="#ece4dc" text-anchor="end">
<text x="98" y="236.0">100</text>
<text x="98" y="256.0">90</text>
<text x="98" y="276.0">80</text>
<text x="98" y="296.0">70</text>
<text x="98" y="316.0">60</text>
<text x="98" y="336.0">50</text>
<text x="98" y="356.0">40</text>
<text x="98" y="376.0">30</text>
<text x="98" y="396.0">20</text>
<text x="98" y="416.0">10</text>
<text x="98" y="436.0">0</text>
<text x="98" y="456.0">-10</text>
<text x="98" y="476.0">-20</text>
<text x="98" y="496.0">-30</text>
<text x="98" y="516.0">-40</text>
<text x="98" y="629.0">100</text>
<text x="98" y="647.0">80</text>
<text x="98" y="665.3">60</text>
<text x="98" y="683.7">40</text>
<text x="98" y="702.0">20</text>
<text x="98" y="720.0">0</text>
</g>
<g font-family="'DejaVu Sans','Liberation Sans',sans-serif" font-size="11" fill="#1e8c1e" text-anchor="end">
<text x="98" y="539.3">10</text>
<text x="98" y="566.5">5</text>
<text x="98" y="594.3">0</text>
<text x="98" y="621.5">-5</text>
</g>
<text x="104" y="218" font-family="'DejaVu Sans','Liberation Sans',sans-serif" font-size="11.6" fill="#f4f044">Ema(5):35.01</text>
<text x="197" y="218" font-family="'DejaVu Sans','Liberation Sans',sans-serif" font-size="11.6" fill="#22f022" text-anchor="end">a(10):35.20</text>
<text x="217.5" y="218" font-family="'DejaVu Sans','Liberation Sans',sans-serif" font-size="11.6" fill="#9c9a34" text-anchor="end">a(20)35.20,20.20</text>
<text x="113" y="527" font-family="'DejaVu Sans','Liberation Sans',sans-serif" font-size="11.6" fill="#2ee62e">AC:[26,12,9]5.19</text>
<text x="104" y="527" font-family="'DejaVu Sans','Liberation Sans',sans-serif" font-size="11.6" fill="#ffffff">MACD[26,12,9]: Y(101)= 11.05</text>
<text x="112" y="627" font-family="'DejaVu Sans','Liberation Sans',sans-serif" font-size="11.6" fill="#ff2a22">DX[14]+: 25.61</text>
<text x="118" y="627" font-family="'DejaVu Sans','Liberation Sans',sans-serif" font-size="11.6" fill="#1e8c1e">X[14]-: 26.11</text>
<text x="104" y="627" font-family="'DejaVu Sans','Liberation Sans',sans-serif" font-size="11.6" fill="#ffffff">ADX[14]: Y(101)= 39.08</text>
<text transform="translate(74,594) rotate(-90)" font-family="'DejaVu Sans','Liberation Sans',sans-serif" font-size="13" font-weight="bold" font-style="italic" fill="#1c1cf0">MACD</text>
<text transform="translate(68,683) rotate(-90)" font-family="'DejaVu Sans','Liberation Sans',sans-serif" font-size="12.5" font-weight="bold" font-style="italic" fill="#19dcdc">ADX</text>
</svg>

  <!-- ============ BOTTOM BAR ============ -->
  <div style="left:7px;top:730px;width:1266px;height:28px;background:#000"></div>
  <div class="bb mono" style="left:16px">默认设置</div>
  <div class="bb mono lat" style="left:86px">MA</div>
  <div class="bb mono lat" style="left:121px">EMA</div>
  <div class="bb mono lat" style="left:157px">Alli</div>
  <div class="bb mono lat" style="left:196px">Boll</div>
  <div class="bb mono lat" style="left:235px">MACD</div>
  <div class="bb mono lat" style="left:278px">ADX</div>
  <div class="bb mono lat" style="left:316px">GTR</div>
  <div class="bb mono lat" style="left:355px">RVI</div>
  <div class="bb mono lat" style="left:394px">ATR</div>
  <div class="bb mono lat" style="left:433px">CCI</div>
  <div class="bb mono lat" style="left:472px">SAR</div>
  <div class="bb mono lat" style="left:511px">RSI</div>
  <div class="bb mono" style="left:547px">无指标</div>
  <div class="bb mono" style="left:598px">参数设置</div>
  <div class="bb mono" style="left:661px">放大镜</div>
</div>
</body>
</html>
